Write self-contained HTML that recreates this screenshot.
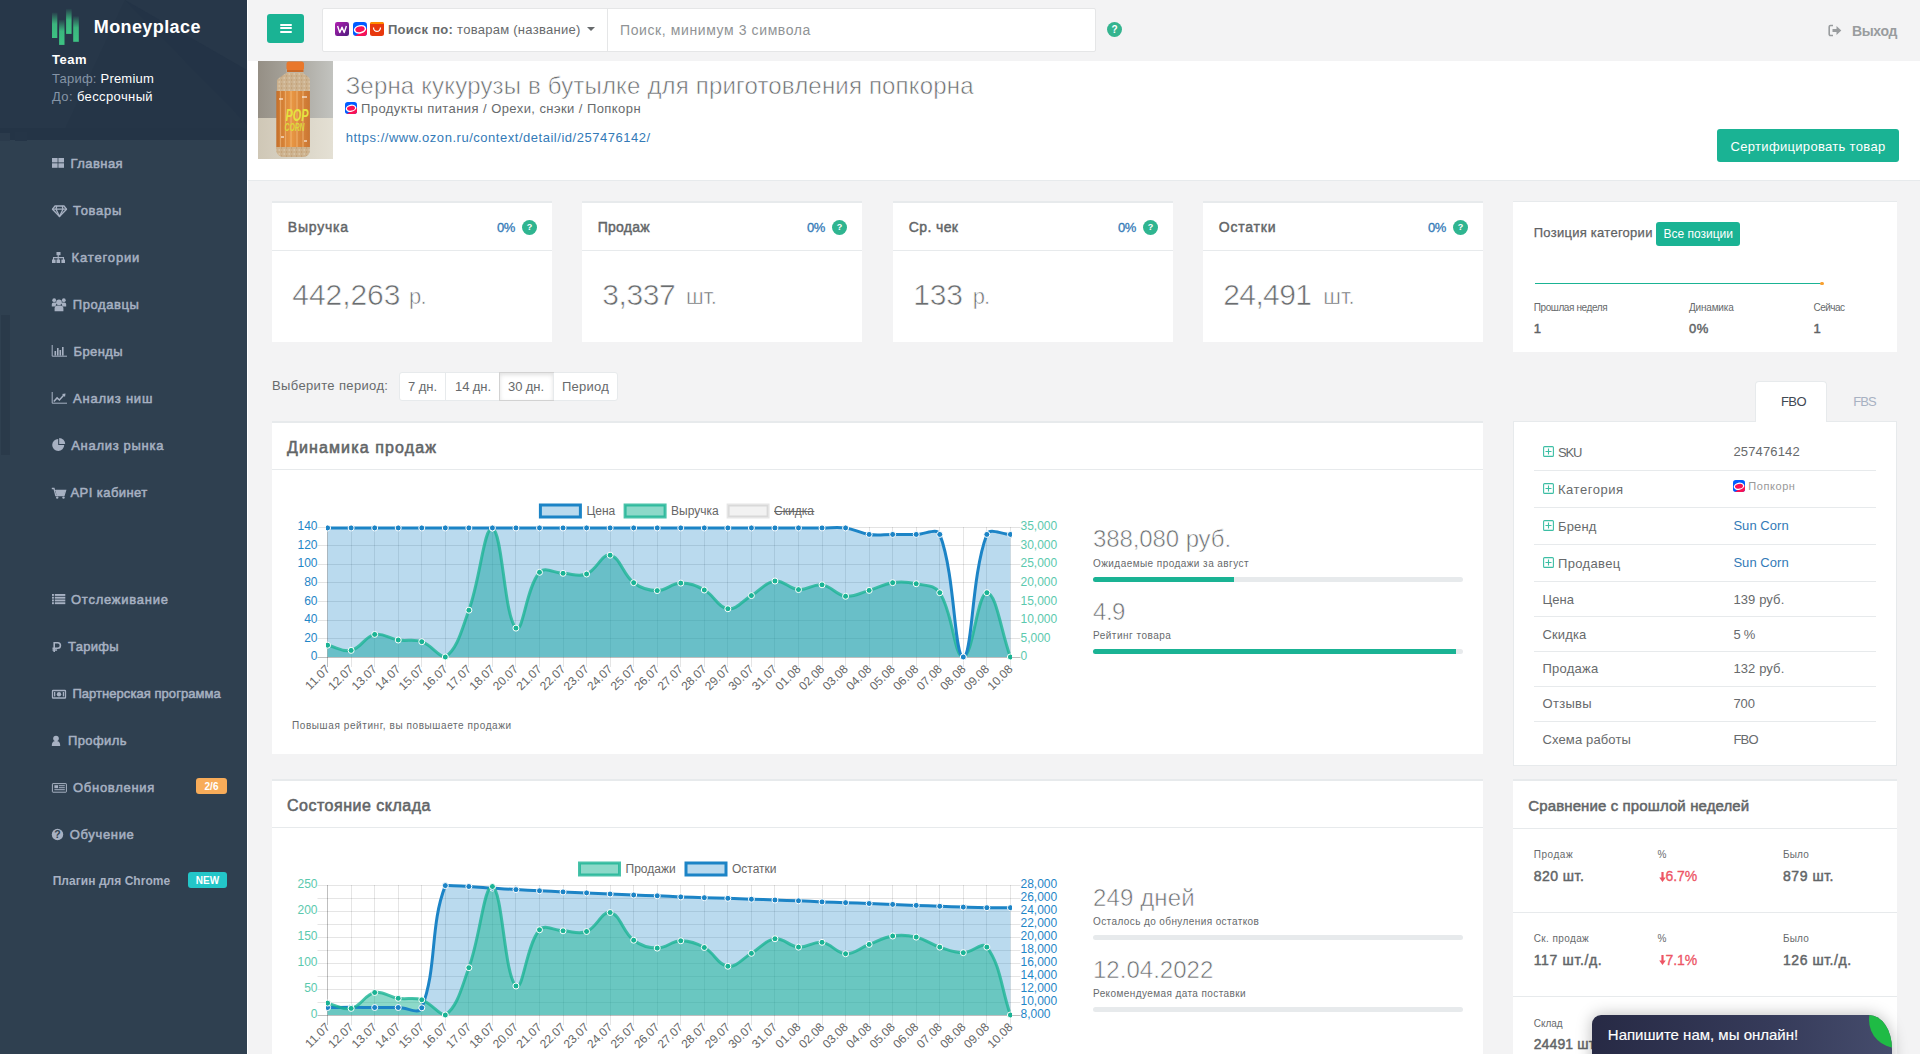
<!DOCTYPE html>
<html><head><meta charset="utf-8"><title>Moneyplace</title>
<style>
html,body{margin:0;padding:0;}
body{width:1920px;height:1054px;overflow:hidden;position:relative;background:#f3f3f4;font-family:"Liberation Sans", sans-serif;}

</style></head><body>
<div style="position:absolute;left:0px;top:0px;width:247px;height:1054px;background:#2f4050;"></div>
<svg style="position:absolute;left:0;top:0" width="247" height="141" viewBox="0 0 247 141">
<rect x="0" y="0" width="247" height="140" fill="#233346"/>
<polygon points="0,0 125,0 235,112 247,125 247,140 0,140" fill="#253547"/>
<polygon points="0,0 125,0 60,140 0,140" fill="#273749"/>
<polygon points="125,0 247,0 247,70" fill="#273749"/>
<rect x="0" y="128" width="247" height="12" fill="#243446"/>
<rect x="0" y="133" width="10" height="8" fill="#2b3b4c"/>
<rect x="15" y="132" width="12" height="13" fill="#253547"/>
</svg>
<div style="position:absolute;left:1px;top:315px;width:9px;height:140px;background:#2a3a4a;"></div>
<div style="position:absolute;left:247px;top:0px;width:1px;height:1054px;background:#ffffff;"></div>
<svg style="position:absolute;left:0;top:0" width="100" height="50" viewBox="0 0 100 50">
<defs><linearGradient id="lg" x1="0" y1="0" x2="0" y2="1">
<stop offset="0" stop-color="#3dc383" stop-opacity="0.05"/>
<stop offset="0.45" stop-color="#3dc383" stop-opacity="0.9"/>
<stop offset="1" stop-color="#3dc383" stop-opacity="1"/></linearGradient></defs>
<rect x="52" y="12.5" width="5.3" height="25.5" fill="url(#lg)"/>
<rect x="59.1" y="19.8" width="5.4" height="25.1" fill="url(#lg)"/>
<rect x="66.1" y="8.9" width="5.5" height="25" fill="url(#lg)"/>
<rect x="73.2" y="16.2" width="5.6" height="25.6" fill="url(#lg)"/>
</svg>
<div style="position:absolute;left:93.8px;top:15.66px;height:23px;line-height:23px;font-size:18px;color:#ffffff;font-weight:bold;white-space:nowrap;letter-spacing:0.395px;">Moneyplace</div>
<div style="position:absolute;left:52px;top:50.70px;height:17px;line-height:17px;font-size:13px;color:#ffffff;font-weight:bold;white-space:nowrap;letter-spacing:0.500px;">Team</div>
<div style="position:absolute;left:52px;top:70.00px;height:17px;line-height:17px;font-size:13px;color:#ffffff;font-weight:normal;white-space:nowrap;letter-spacing:0.213px;"><span style="color:#8594a6">Тариф:</span> Premium</div>
<div style="position:absolute;left:52px;top:88.30px;height:17px;line-height:17px;font-size:13px;color:#ffffff;font-weight:normal;white-space:nowrap;letter-spacing:0.381px;"><span style="color:#8594a6">До:</span> бессрочный</div>
<div style="position:absolute;left:70.4px;top:154.80px;height:17px;line-height:17px;font-size:13px;color:#a7b1c2;font-weight:normal;white-space:nowrap;letter-spacing:0.459px;-webkit-text-stroke:0.5px currentColor;">Главная</div>
<div style="position:absolute;left:73px;top:202.00px;height:17px;line-height:17px;font-size:13px;color:#a7b1c2;font-weight:normal;white-space:nowrap;letter-spacing:0.711px;-webkit-text-stroke:0.5px currentColor;">Товары</div>
<div style="position:absolute;left:71.6px;top:249.00px;height:17px;line-height:17px;font-size:13px;color:#a7b1c2;font-weight:normal;white-space:nowrap;letter-spacing:0.844px;-webkit-text-stroke:0.5px currentColor;">Категории</div>
<div style="position:absolute;left:72.7px;top:295.70px;height:17px;line-height:17px;font-size:13px;color:#a7b1c2;font-weight:normal;white-space:nowrap;letter-spacing:0.596px;-webkit-text-stroke:0.5px currentColor;">Продавцы</div>
<div style="position:absolute;left:73.5px;top:342.90px;height:17px;line-height:17px;font-size:13px;color:#a7b1c2;font-weight:normal;white-space:nowrap;letter-spacing:0.415px;-webkit-text-stroke:0.5px currentColor;">Бренды</div>
<div style="position:absolute;left:73.1px;top:389.90px;height:17px;line-height:17px;font-size:13px;color:#a7b1c2;font-weight:normal;white-space:nowrap;letter-spacing:0.762px;-webkit-text-stroke:0.5px currentColor;">Анализ ниш</div>
<div style="position:absolute;left:71.2px;top:437.10px;height:17px;line-height:17px;font-size:13px;color:#a7b1c2;font-weight:normal;white-space:nowrap;letter-spacing:0.703px;-webkit-text-stroke:0.5px currentColor;">Анализ рынка</div>
<div style="position:absolute;left:70.4px;top:484.10px;height:17px;line-height:17px;font-size:13px;color:#a7b1c2;font-weight:normal;white-space:nowrap;letter-spacing:0.453px;-webkit-text-stroke:0.5px currentColor;">API кабинет</div>
<div style="position:absolute;left:71px;top:591.20px;height:17px;line-height:17px;font-size:13px;color:#a7b1c2;font-weight:normal;white-space:nowrap;letter-spacing:0.748px;-webkit-text-stroke:0.5px currentColor;">Отслеживание</div>
<div style="position:absolute;left:68px;top:638.30px;height:17px;line-height:17px;font-size:13px;color:#a7b1c2;font-weight:normal;white-space:nowrap;letter-spacing:0.296px;-webkit-text-stroke:0.5px currentColor;">Тарифы</div>
<div style="position:absolute;left:72.4px;top:685.40px;height:17px;line-height:17px;font-size:13px;color:#a7b1c2;font-weight:normal;white-space:nowrap;letter-spacing:0.053px;-webkit-text-stroke:0.5px currentColor;">Партнерская программа</div>
<div style="position:absolute;left:68px;top:732.30px;height:17px;line-height:17px;font-size:13px;color:#a7b1c2;font-weight:normal;white-space:nowrap;letter-spacing:0.382px;-webkit-text-stroke:0.5px currentColor;">Профиль</div>
<div style="position:absolute;left:73px;top:779.40px;height:17px;line-height:17px;font-size:13px;color:#a7b1c2;font-weight:normal;white-space:nowrap;letter-spacing:0.713px;-webkit-text-stroke:0.5px currentColor;">Обновления</div>
<div style="position:absolute;left:69.7px;top:825.90px;height:17px;line-height:17px;font-size:13px;color:#a7b1c2;font-weight:normal;white-space:nowrap;letter-spacing:0.668px;-webkit-text-stroke:0.5px currentColor;">Обучение</div>
<div style="position:absolute;left:52.7px;top:873.94px;height:15px;line-height:15px;font-size:12px;color:#a7b1c2;font-weight:bold;white-space:nowrap;letter-spacing:0.047px;">Плагин для Chrome</div>
<div style="position:absolute;left:196px;top:778px;width:31px;height:16px;background:#f8ac59;border-radius:3px;"></div>
<div style="position:absolute;left:211.5px;top:780.03px;height:13px;line-height:13px;font-size:10px;color:#ffffff;font-weight:bold;white-space:nowrap;width:0;display:flex;justify-content:center;">2/6</div>
<div style="position:absolute;left:188px;top:872px;width:39px;height:16px;background:#23c6c8;border-radius:3px;"></div>
<div style="position:absolute;left:207.5px;top:874.03px;height:13px;line-height:13px;font-size:10px;color:#ffffff;font-weight:bold;white-space:nowrap;width:0;display:flex;justify-content:center;">NEW</div>
<svg style="position:absolute;left:0;top:0" width="247" height="900" viewBox="0 0 247 900" fill="#a7b1c2">
<!-- th-large -->
<rect x="52" y="158" width="5.6" height="4.4"/><rect x="58.4" y="158" width="5.6" height="4.4"/>
<rect x="52" y="163.3" width="5.6" height="4.5"/><rect x="58.4" y="163.3" width="5.6" height="4.5"/>
<!-- diamond -->
<g fill="none" stroke="#a7b1c2" stroke-width="1.3" stroke-linejoin="round">
<path d="M55,206 L64,206 L66.5,209.2 L59.5,216.5 L52.5,209.2 Z"/>
<path d="M52.5,209.2 L66.5,209.2 M56.8,206 L56,209.2 L59.5,216.5 L63,209.2 L62.2,206"/>
</g>
<!-- sitemap -->
<rect x="56.5" y="252" width="4" height="3.2"/>
<path d="M58.2,255 v2.6 M53.5,260 v-2.4 h10 v2.4 M58.2,257.6 v2.4" stroke="#a7b1c2" stroke-width="1.1" fill="none"/>
<rect x="52" y="259.5" width="3.6" height="3.5"/><rect x="56.5" y="259.5" width="3.6" height="3.5"/><rect x="61.4" y="259.5" width="3.6" height="3.5"/>
<!-- users -->
<circle cx="54.2" cy="300.2" r="1.9"/><circle cx="63.8" cy="300.2" r="1.9"/>
<path d="M51.8,306.6 v-2.2 c0,-1.2 0.8,-2 2,-2 h1.6 c0.8,0 1.3,0.3 1.6,0.8 c-0.9,0.9 -1.3,2 -1.4,3.4 Z"/>
<path d="M66.2,306.6 v-2.2 c0,-1.2 -0.8,-2 -2,-2 h-1.6 c-0.8,0 -1.3,0.3 -1.6,0.8 c0.9,0.9 1.3,2 1.4,3.4 Z"/>
<circle cx="59" cy="302.3" r="2.8"/>
<path d="M54.6,311.2 v-2.6 c0,-2 1.2,-3.2 3,-3.2 h2.8 c1.8,0 3,1.2 3,3.2 v2.6 Z"/>
<!-- bar chart -->
<path d="M52.2,345 v11.2 h14.8" stroke="#a7b1c2" stroke-width="1" fill="none"/>
<rect x="54.5" y="351" width="1.6" height="4.6"/><rect x="57" y="348" width="1.6" height="7.6"/>
<rect x="59.5" y="350" width="1.6" height="5.6"/><rect x="62" y="347" width="1.6" height="8.6"/>
<!-- line chart -->
<path d="M52.2,392 v11.2 h14.8" stroke="#a7b1c2" stroke-width="1" fill="none"/>
<path d="M53.8,401.5 l3.3,-3.6 l2.3,2.1 l4.5,-5" stroke="#a7b1c2" stroke-width="1.5" fill="none"/>
<path d="M62,394 l3.5,-0.6 l-0.5,3.5 Z"/>
<!-- pie -->
<path d="M58.2,439 v6 h6 a6,6 0 1 1 -6,-6 Z"/>
<path d="M59.2,438 a6,6 0 0 1 6,6 h-6 Z"/>
<!-- cart -->
<path d="M51.8,488.5 h2.2 l1.8,7.2 h8.2 l1.6,-5.4 h-10.3" stroke="#a7b1c2" stroke-width="1.3" fill="none"/>
<path d="M55.5,490.6 h9.8 l-1.3,4.4 h-7.6 Z"/>
<circle cx="57.2" cy="497.6" r="1.2"/><circle cx="63.5" cy="497.6" r="1.2"/>
<!-- list -->
<rect x="52" y="594" width="1.9" height="1.9"/><rect x="54.8" y="594" width="10.5" height="1.9"/>
<rect x="52" y="596.75" width="1.9" height="1.9"/><rect x="54.8" y="596.75" width="10.5" height="1.9"/>
<rect x="52" y="599.5" width="1.9" height="1.9"/><rect x="54.8" y="599.5" width="10.5" height="1.9"/>
<rect x="52" y="602.25" width="1.9" height="1.9"/><rect x="54.8" y="602.25" width="10.5" height="1.9"/>
<!-- rub -->
<path d="M54.2,652 v-9.2 h3.5 a2.7,2.7 0 0 1 0,5.4 h-5.2 M52.5,650 h4.6" stroke="#a7b1c2" stroke-width="1.6" fill="none"/>
<!-- money -->
<rect x="52.5" y="690.5" width="13" height="7.5" rx="0.6" stroke="#a7b1c2" stroke-width="1.3" fill="none"/>
<circle cx="59" cy="694.2" r="2.2"/>
<rect x="54" y="692" width="1.3" height="4.4"/><rect x="62.8" y="692" width="1.3" height="4.4"/>
<!-- user -->
<circle cx="56" cy="738.5" r="2.8"/><path d="M51.8,746 c0,-3.8 1.6,-5 4.2,-5 c2.6,0 4.2,1.2 4.2,5 Z"/>
<!-- newspaper -->
<rect x="52.4" y="783.6" width="14" height="8.6" rx="0.5" stroke="#a7b1c2" stroke-width="1" fill="none"/>
<rect x="54.4" y="785.2" width="3.6" height="3"/><rect x="58.8" y="785.2" width="6" height="1"/>
<rect x="58.8" y="787.2" width="6" height="1"/><rect x="54.4" y="789.2" width="10.4" height="1"/>
<!-- question circle -->
<circle cx="57.5" cy="834.5" r="5.7"/>
</svg>
<div style="position:absolute;left:52px;top:828px;width:11px;height:13px;color:#2f4050;font:bold 10.5px/13px 'Liberation Sans',sans-serif;text-align:center;">?</div>
<div style="position:absolute;left:267px;top:14px;width:37px;height:29px;background:#1ab394;border-radius:3px;"></div>
<div style="position:absolute;left:279.5px;top:23.8px;width:12.2px;height:2.1px;background:#fff;border-radius:1px;"></div>
<div style="position:absolute;left:279.5px;top:27.3px;width:12.2px;height:2.1px;background:#fff;border-radius:1px;"></div>
<div style="position:absolute;left:279.5px;top:30.9px;width:12.2px;height:2.1px;background:#fff;border-radius:1px;"></div>
<div style="position:absolute;left:322px;top:8px;width:774px;height:44px;background:#fff;border:1px solid #e5e6e7;border-radius:2px;box-sizing:border-box;"></div>
<div style="position:absolute;left:607px;top:9px;width:1px;height:42px;background:#e5e6e7;"></div>
<svg style="position:absolute;left:335px;top:22px" width="50" height="14" viewBox="0 0 50 14">
<defs><linearGradient id="wb" x1="0" y1="0" x2="1" y2="1"><stop offset="0" stop-color="#b01fb0"/><stop offset="1" stop-color="#4e1a7e"/></linearGradient></defs>
<rect x="0" y="0" width="14" height="14" rx="2.2" fill="url(#wb)"/>
<path d="M2.6,4 L4.8,10.6 L7,5.2 L9.2,10.6 L11.4,4" stroke="#fff" stroke-width="1.4" fill="none" stroke-linejoin="round"/>
<clipPath id="ozt"><rect x="18" y="0" width="14" height="14" rx="3.2"/></clipPath>
<g clip-path="url(#ozt)"><rect x="18" y="0" width="14" height="14" fill="#005bff"/>
<path d="M20,14 L32,6.5 L32,14 Z" fill="#f91155"/>
<ellipse cx="25" cy="7.3" rx="5.5" ry="3.5" transform="rotate(-12 25 7.3)" fill="#f91155" stroke="#fff" stroke-width="1.5"/></g>
<rect x="35" y="0" width="14" height="14" rx="2.5" fill="#e8380d"/>
<rect x="35" y="0" width="14" height="3" rx="2" fill="#ff8c00"/>
<rect x="35" y="2" width="14" height="2" fill="#e8380d"/>
<path d="M38.5,5.6 a3.5,3.8 0 0 0 7,0" stroke="#fff" stroke-width="1.2" fill="none"/>
</svg>
<div style="position:absolute;left:388px;top:21.30px;height:17px;line-height:17px;font-size:13px;color:#676a6c;font-weight:normal;white-space:nowrap;letter-spacing:0.270px;"><b>Поиск по:</b> товарам (название)</div>
<div style="position:absolute;left:587px;top:27px;width:0;height:0;border-left:4px solid transparent;border-right:4px solid transparent;border-top:4px solid #676a6c;"></div>
<div style="position:absolute;left:620px;top:21.35px;height:18px;line-height:18px;font-size:14px;color:#909395;font-weight:normal;white-space:nowrap;letter-spacing:0.602px;">Поиск, минимум 3 символа</div>
<div style="position:absolute;left:1107px;top:22px;width:15px;height:15px;border-radius:50%;background:#34b48f;color:#fff;font:bold 10px/15px 'Liberation Sans',sans-serif;text-align:center;">?</div>
<svg style="position:absolute;left:1828px;top:24px" width="14" height="13" viewBox="0 0 14 13">
<path d="M5,1.5 H2.5 a1.3,1.3 0 0 0 -1.3,1.3 v7.4 a1.3,1.3 0 0 0 1.3,1.3 H5" stroke="#999c9e" stroke-width="1.6" fill="none"/>
<path d="M4.5,5 h4 v-3 l4.8,4.5 l-4.8,4.5 v-3 h-4 Z" fill="#999c9e"/>
</svg>
<div style="position:absolute;left:1852px;top:21.65px;height:18px;line-height:18px;font-size:14px;color:#999c9e;font-weight:bold;white-space:nowrap;letter-spacing:-0.353px;">Выход</div>
<div style="position:absolute;left:248px;top:61px;width:1672px;height:119px;background:#fff;"></div>
<div style="position:absolute;left:248px;top:180px;width:1672px;height:1px;background:#e7eaec;"></div>
<svg style="position:absolute;left:258px;top:61px" width="75" height="98" viewBox="0 0 75 98">
<defs>
<linearGradient id="wall" x1="0" y1="0" x2="1" y2="0"><stop offset="0" stop-color="#958f85"/><stop offset="0.5" stop-color="#aaa79f"/><stop offset="1" stop-color="#c2c3bf"/></linearGradient>
<linearGradient id="table" x1="0" y1="0" x2="1" y2="0"><stop offset="0" stop-color="#cfc7b6"/><stop offset="1" stop-color="#e4e0d4"/></linearGradient>
<linearGradient id="lab" x1="0" y1="0" x2="1" y2="0"><stop offset="0" stop-color="#c56f2a"/><stop offset="0.45" stop-color="#e99744"/><stop offset="1" stop-color="#c97532"/></linearGradient>
<pattern id="corn" width="5" height="4" patternUnits="userSpaceOnUse"><rect width="5" height="4" fill="#cfb28c"/><circle cx="1.2" cy="1" r="0.8" fill="#e2d2b6"/><circle cx="3.6" cy="3" r="0.7" fill="#bf9868"/></pattern>
</defs>
<rect x="0" y="0" width="75" height="57" fill="url(#wall)"/>
<rect x="0" y="57" width="75" height="41" fill="url(#table)"/>
<path d="M28.5,8 h17 v4 c0,3 6.5,6 6.5,13 v64 c0,4 -3,7 -7,7 h-19 c-4,0 -7,-3 -7,-7 v-64 c0,-7 9.5,-10 9.5,-13 z" fill="#bfb5a3"/>
<path d="M19,19 c2,-3 7,-5 9,-7 h17 c2,2 7,4 7,7 v11 h-33 z" fill="url(#corn)" opacity="0.85"/>
<rect x="28.5" y="0.5" width="17.5" height="9" rx="2.5" fill="#e9772b"/>
<rect x="29" y="9" width="16.5" height="2" fill="#c96a2a"/>
<rect x="18.3" y="30" width="33.6" height="56" fill="url(#lab)"/>
<path d="M22.5,30 v56 M27.5,30 v56 M33,30 v56 M39,30 v56 M45,30 v56" stroke="#f5be80" stroke-width="1.3" opacity="0.6"/>
<path d="M21,38 h4 M44,36 h5 M23,76 h3 M46,80 h3" stroke="#fff" stroke-width="1.5" opacity="0.7"/>
<text x="27.5" y="60" font-family="Liberation Sans" font-weight="bold" font-style="italic" font-size="17" fill="#e5e240" textLength="23" lengthAdjust="spacingAndGlyphs">POP</text>
<text x="26.5" y="70" font-family="Liberation Sans" font-weight="bold" font-style="italic" font-size="11" fill="#dcd83c" textLength="20" lengthAdjust="spacingAndGlyphs">CORN</text>
<path d="M18.3,86 h33.6 v3 c0,4 -3,7 -7,7 h-19.6 c-4,0 -7,-3 -7,-7 z" fill="url(#corn)" opacity="0.9"/>
</svg>
<div style="position:absolute;left:345.7px;top:70.68px;height:30px;line-height:30px;font-size:24px;color:#6a6d6f;font-weight:normal;white-space:nowrap;letter-spacing:0.172px;-webkit-text-stroke:0.6px #ffffff;">Зерна кукурузы в бутылке для приготовления попкорна</div>
<svg style="position:absolute;left:345px;top:101.5px" width="12" height="12" viewBox="0 0 14 14">
<defs><clipPath id="oz345101"><rect x="0" y="0" width="14" height="14" rx="3.2"/></clipPath></defs>
<g clip-path="url(#oz345101)">
<rect x="0" y="0" width="14" height="14" fill="#005bff"/>
<path d="M2,14 L14,6.5 L14,14 Z" fill="#f91155"/>
<ellipse cx="7" cy="7.3" rx="5.5" ry="3.5" transform="rotate(-12 7 7.3)" fill="#f91155" stroke="#fff" stroke-width="1.5"/>
</g>
</svg>
<div style="position:absolute;left:361px;top:99.80px;height:17px;line-height:17px;font-size:13px;color:#676a6c;font-weight:normal;white-space:nowrap;letter-spacing:0.428px;">Продукты питания / Орехи, снэки / Попкорн</div>
<div style="position:absolute;left:345.7px;top:128.70px;height:17px;line-height:17px;font-size:13px;color:#337ab7;font-weight:normal;white-space:nowrap;letter-spacing:0.527px;">https://www.ozon.ru/context/detail/id/257476142/</div>
<div style="position:absolute;left:1717px;top:129px;width:182px;height:33px;background:#1ab394;border-radius:3px;"></div>
<div style="position:absolute;left:1730.5px;top:138.00px;height:17px;line-height:17px;font-size:13px;color:#ffffff;font-weight:normal;white-space:nowrap;letter-spacing:0.323px;">Сертифицировать товар</div>
<div style="position:absolute;left:272px;top:201px;width:280px;height:2px;background:#e7eaec;"></div>
<div style="position:absolute;left:272px;top:203px;width:280px;height:139px;background:#fff;"></div>
<div style="position:absolute;left:272px;top:250px;width:280px;height:1px;background:#e7eaec;"></div>
<div style="position:absolute;left:287.8px;top:218.15px;height:18px;line-height:18px;font-size:14px;color:#626567;font-weight:normal;white-space:nowrap;letter-spacing:0.779px;-webkit-text-stroke:0.45px currentColor;">Выручка</div>
<div style="position:absolute;left:497px;top:219.30px;height:17px;line-height:17px;font-size:13px;color:#337ab7;font-weight:normal;white-space:nowrap;letter-spacing:-0.398px;-webkit-text-stroke:0.3px currentColor;">0%</div>
<div style="position:absolute;left:522px;top:220px;width:15px;height:15px;border-radius:50%;background:#2fb590;color:#fff;font:bold 9px/15px 'Liberation Sans',sans-serif;text-align:center;">?</div>
<div style="position:absolute;left:292.3px;top:275.61px;height:38px;line-height:38px;font-size:30px;color:#6a6d6f;font-weight:normal;white-space:nowrap;letter-spacing:-0.065px;-webkit-text-stroke:0.6px #ffffff;">442,263</div>
<div style="position:absolute;left:582px;top:201px;width:280px;height:2px;background:#e7eaec;"></div>
<div style="position:absolute;left:582px;top:203px;width:280px;height:139px;background:#fff;"></div>
<div style="position:absolute;left:582px;top:250px;width:280px;height:1px;background:#e7eaec;"></div>
<div style="position:absolute;left:597.8px;top:218.15px;height:18px;line-height:18px;font-size:14px;color:#626567;font-weight:normal;white-space:nowrap;letter-spacing:0.224px;-webkit-text-stroke:0.45px currentColor;">Продаж</div>
<div style="position:absolute;left:807px;top:219.30px;height:17px;line-height:17px;font-size:13px;color:#337ab7;font-weight:normal;white-space:nowrap;letter-spacing:-0.398px;-webkit-text-stroke:0.3px currentColor;">0%</div>
<div style="position:absolute;left:832px;top:220px;width:15px;height:15px;border-radius:50%;background:#2fb590;color:#fff;font:bold 9px/15px 'Liberation Sans',sans-serif;text-align:center;">?</div>
<div style="position:absolute;left:602.3px;top:275.61px;height:38px;line-height:38px;font-size:30px;color:#6a6d6f;font-weight:normal;white-space:nowrap;letter-spacing:-0.416px;-webkit-text-stroke:0.6px #ffffff;">3,337</div>
<div style="position:absolute;left:893px;top:201px;width:280px;height:2px;background:#e7eaec;"></div>
<div style="position:absolute;left:893px;top:203px;width:280px;height:139px;background:#fff;"></div>
<div style="position:absolute;left:893px;top:250px;width:280px;height:1px;background:#e7eaec;"></div>
<div style="position:absolute;left:908.8px;top:218.15px;height:18px;line-height:18px;font-size:14px;color:#626567;font-weight:normal;white-space:nowrap;letter-spacing:0.373px;-webkit-text-stroke:0.45px currentColor;">Ср. чек</div>
<div style="position:absolute;left:1118px;top:219.30px;height:17px;line-height:17px;font-size:13px;color:#337ab7;font-weight:normal;white-space:nowrap;letter-spacing:-0.398px;-webkit-text-stroke:0.3px currentColor;">0%</div>
<div style="position:absolute;left:1143px;top:220px;width:15px;height:15px;border-radius:50%;background:#2fb590;color:#fff;font:bold 9px/15px 'Liberation Sans',sans-serif;text-align:center;">?</div>
<div style="position:absolute;left:913.3px;top:275.61px;height:38px;line-height:38px;font-size:30px;color:#6a6d6f;font-weight:normal;white-space:nowrap;letter-spacing:-0.221px;-webkit-text-stroke:0.6px #ffffff;">133</div>
<div style="position:absolute;left:1203px;top:201px;width:280px;height:2px;background:#e7eaec;"></div>
<div style="position:absolute;left:1203px;top:203px;width:280px;height:139px;background:#fff;"></div>
<div style="position:absolute;left:1203px;top:250px;width:280px;height:1px;background:#e7eaec;"></div>
<div style="position:absolute;left:1218.8px;top:218.15px;height:18px;line-height:18px;font-size:14px;color:#626567;font-weight:normal;white-space:nowrap;letter-spacing:0.788px;-webkit-text-stroke:0.45px currentColor;">Остатки</div>
<div style="position:absolute;left:1428px;top:219.30px;height:17px;line-height:17px;font-size:13px;color:#337ab7;font-weight:normal;white-space:nowrap;letter-spacing:-0.398px;-webkit-text-stroke:0.3px currentColor;">0%</div>
<div style="position:absolute;left:1453px;top:220px;width:15px;height:15px;border-radius:50%;background:#2fb590;color:#fff;font:bold 9px/15px 'Liberation Sans',sans-serif;text-align:center;">?</div>
<div style="position:absolute;left:1223.3px;top:275.61px;height:38px;line-height:38px;font-size:30px;color:#6a6d6f;font-weight:normal;white-space:nowrap;letter-spacing:-0.628px;-webkit-text-stroke:0.6px #ffffff;">24,491</div>
<div style="position:absolute;left:409px;top:283.38px;height:28px;line-height:28px;font-size:22px;color:#6a6d6f;font-weight:normal;white-space:nowrap;letter-spacing:-0.830px;-webkit-text-stroke:0.6px #ffffff;">р.</div>
<div style="position:absolute;left:686px;top:283.38px;height:28px;line-height:28px;font-size:22px;color:#6a6d6f;font-weight:normal;white-space:nowrap;letter-spacing:-0.235px;-webkit-text-stroke:0.6px #ffffff;">шт.</div>
<div style="position:absolute;left:972.7px;top:283.38px;height:28px;line-height:28px;font-size:22px;color:#6a6d6f;font-weight:normal;white-space:nowrap;letter-spacing:-0.980px;-webkit-text-stroke:0.6px #ffffff;">р.</div>
<div style="position:absolute;left:1323.3px;top:283.38px;height:28px;line-height:28px;font-size:22px;color:#6a6d6f;font-weight:normal;white-space:nowrap;letter-spacing:-0.002px;-webkit-text-stroke:0.6px #ffffff;">шт.</div>
<div style="position:absolute;left:272px;top:377.00px;height:17px;line-height:17px;font-size:13px;color:#676a6c;font-weight:normal;white-space:nowrap;letter-spacing:0.357px;">Выберите период:</div>
<div style="position:absolute;left:399px;top:372px;width:219px;height:29px;background:#fff;border:1px solid #e7eaec;border-radius:3px;box-sizing:border-box;"></div>
<div style="position:absolute;left:445px;top:373px;width:1px;height:27px;background:#e7eaec;"></div>
<div style="position:absolute;left:499px;top:372px;width:55px;height:29px;background:#fff;border:1px solid #d2d2d2;box-sizing:border-box;box-shadow:inset 0 2px 4px rgba(0,0,0,0.12);"></div>
<div style="position:absolute;left:553px;top:373px;width:1px;height:27px;background:#e7eaec;"></div>
<div style="position:absolute;left:408px;top:378.00px;height:17px;line-height:17px;font-size:13px;color:#676a6c;font-weight:normal;white-space:nowrap;letter-spacing:-0.044px;">7 дн.</div>
<div style="position:absolute;left:455px;top:378.00px;height:17px;line-height:17px;font-size:13px;color:#676a6c;font-weight:normal;white-space:nowrap;letter-spacing:-0.076px;">14 дн.</div>
<div style="position:absolute;left:508px;top:378.00px;height:17px;line-height:17px;font-size:13px;color:#676a6c;font-weight:normal;white-space:nowrap;letter-spacing:-0.076px;">30 дн.</div>
<div style="position:absolute;left:562px;top:378.00px;height:17px;line-height:17px;font-size:13px;color:#676a6c;font-weight:normal;white-space:nowrap;letter-spacing:0.232px;">Период</div>
<div style="position:absolute;left:272px;top:421px;width:1211px;height:2px;background:#e7eaec;"></div>
<div style="position:absolute;left:272px;top:423px;width:1211px;height:331px;background:#fff;"></div>
<div style="position:absolute;left:272px;top:469px;width:1211px;height:1px;background:#e7eaec;"></div>
<div style="position:absolute;left:287px;top:437.96px;height:20px;line-height:20px;font-size:16px;color:#626567;font-weight:normal;white-space:nowrap;letter-spacing:1.121px;-webkit-text-stroke:0.55px currentColor;">Динамика продаж</div>
<div style="position:absolute;left:292px;top:719.03px;height:13px;line-height:13px;font-size:10px;color:#676a6c;font-weight:normal;white-space:nowrap;letter-spacing:0.592px;">Повышая рейтинг, вы повышаете продажи</div>
<div style="position:absolute;left:1093px;top:524.38px;height:30px;line-height:30px;font-size:24px;color:#6a6d6f;font-weight:normal;white-space:nowrap;letter-spacing:-0.099px;-webkit-text-stroke:0.6px #ffffff;">388,080 руб.</div>
<div style="position:absolute;left:1093px;top:556.74px;height:13px;line-height:13px;font-size:10px;color:#676a6c;font-weight:normal;white-space:nowrap;letter-spacing:0.440px;">Ожидаемые продажи за август</div>
<div style="position:absolute;left:1093px;top:577px;width:370px;height:5px;background:#e7eaec;border-radius:3px;"></div>
<div style="position:absolute;left:1093px;top:577px;width:141px;height:5px;background:#1ab394;border-radius:3px 0 0 3px;"></div>
<div style="position:absolute;left:1093px;top:596.58px;height:30px;line-height:30px;font-size:24px;color:#6a6d6f;font-weight:normal;white-space:nowrap;letter-spacing:-0.458px;-webkit-text-stroke:0.6px #ffffff;">4.9</div>
<div style="position:absolute;left:1093px;top:629.43px;height:13px;line-height:13px;font-size:10px;color:#676a6c;font-weight:normal;white-space:nowrap;letter-spacing:0.492px;">Рейтинг товара</div>
<div style="position:absolute;left:1093px;top:649px;width:370px;height:5px;background:#e7eaec;border-radius:3px;"></div>
<div style="position:absolute;left:1093px;top:649px;width:363px;height:5px;background:#1ab394;border-radius:3px 0 0 3px;"></div>
<div style="position:absolute;left:272px;top:779px;width:1211px;height:2px;background:#e7eaec;"></div>
<div style="position:absolute;left:272px;top:781px;width:1211px;height:273px;background:#fff;"></div>
<div style="position:absolute;left:272px;top:827px;width:1211px;height:1px;background:#e7eaec;"></div>
<div style="position:absolute;left:287px;top:796.46px;height:20px;line-height:20px;font-size:16px;color:#626567;font-weight:normal;white-space:nowrap;letter-spacing:0.504px;-webkit-text-stroke:0.55px currentColor;">Состояние склада</div>
<div style="position:absolute;left:1093px;top:883.08px;height:30px;line-height:30px;font-size:24px;color:#6a6d6f;font-weight:normal;white-space:nowrap;letter-spacing:0.121px;-webkit-text-stroke:0.6px #ffffff;">249 дней</div>
<div style="position:absolute;left:1093px;top:915.03px;height:13px;line-height:13px;font-size:10px;color:#676a6c;font-weight:normal;white-space:nowrap;letter-spacing:0.404px;">Осталось до обнуления остатков</div>
<div style="position:absolute;left:1093px;top:935px;width:370px;height:5px;background:#e7eaec;border-radius:3px;"></div>
<div style="position:absolute;left:1093px;top:954.78px;height:30px;line-height:30px;font-size:24px;color:#6a6d6f;font-weight:normal;white-space:nowrap;letter-spacing:0.017px;-webkit-text-stroke:0.6px #ffffff;">12.04.2022</div>
<div style="position:absolute;left:1093px;top:986.74px;height:13px;line-height:13px;font-size:10px;color:#676a6c;font-weight:normal;white-space:nowrap;letter-spacing:0.412px;">Рекомендуемая дата поставки</div>
<div style="position:absolute;left:1093px;top:1007px;width:370px;height:5px;background:#e7eaec;border-radius:3px;"></div>
<svg style="position:absolute;left:0;top:0" width="1920" height="1054" viewBox="0 0 1920 1054">
<defs><clipPath id="c1"><rect x="326.1" y="0" width="685.8" height="1054"/></clipPath></defs>
<line x1="317.5" y1="657.5" x2="1020.5" y2="657.5" stroke="rgba(0,0,0,0.25)" stroke-width="1"/>
<line x1="317.5" y1="638.5" x2="1020.5" y2="638.5" stroke="rgba(0,0,0,0.11)" stroke-width="1"/>
<line x1="317.5" y1="620.5" x2="1020.5" y2="620.5" stroke="rgba(0,0,0,0.11)" stroke-width="1"/>
<line x1="317.5" y1="601.5" x2="1020.5" y2="601.5" stroke="rgba(0,0,0,0.11)" stroke-width="1"/>
<line x1="317.5" y1="582.5" x2="1020.5" y2="582.5" stroke="rgba(0,0,0,0.11)" stroke-width="1"/>
<line x1="317.5" y1="564.5" x2="1020.5" y2="564.5" stroke="rgba(0,0,0,0.11)" stroke-width="1"/>
<line x1="317.5" y1="545.5" x2="1020.5" y2="545.5" stroke="rgba(0,0,0,0.11)" stroke-width="1"/>
<line x1="317.5" y1="527.5" x2="1020.5" y2="527.5" stroke="rgba(0,0,0,0.11)" stroke-width="1"/>
<line x1="327.5" y1="527.0" x2="327.5" y2="667.0" stroke="rgba(0,0,0,0.25)" stroke-width="1"/>
<line x1="351.5" y1="527.0" x2="351.5" y2="667.0" stroke="rgba(0,0,0,0.1)" stroke-width="1"/>
<line x1="374.5" y1="527.0" x2="374.5" y2="667.0" stroke="rgba(0,0,0,0.1)" stroke-width="1"/>
<line x1="398.5" y1="527.0" x2="398.5" y2="667.0" stroke="rgba(0,0,0,0.1)" stroke-width="1"/>
<line x1="421.5" y1="527.0" x2="421.5" y2="667.0" stroke="rgba(0,0,0,0.1)" stroke-width="1"/>
<line x1="445.5" y1="527.0" x2="445.5" y2="667.0" stroke="rgba(0,0,0,0.1)" stroke-width="1"/>
<line x1="468.5" y1="527.0" x2="468.5" y2="667.0" stroke="rgba(0,0,0,0.1)" stroke-width="1"/>
<line x1="492.5" y1="527.0" x2="492.5" y2="667.0" stroke="rgba(0,0,0,0.1)" stroke-width="1"/>
<line x1="515.5" y1="527.0" x2="515.5" y2="667.0" stroke="rgba(0,0,0,0.1)" stroke-width="1"/>
<line x1="539.5" y1="527.0" x2="539.5" y2="667.0" stroke="rgba(0,0,0,0.1)" stroke-width="1"/>
<line x1="563.5" y1="527.0" x2="563.5" y2="667.0" stroke="rgba(0,0,0,0.1)" stroke-width="1"/>
<line x1="586.5" y1="527.0" x2="586.5" y2="667.0" stroke="rgba(0,0,0,0.1)" stroke-width="1"/>
<line x1="610.5" y1="527.0" x2="610.5" y2="667.0" stroke="rgba(0,0,0,0.1)" stroke-width="1"/>
<line x1="633.5" y1="527.0" x2="633.5" y2="667.0" stroke="rgba(0,0,0,0.1)" stroke-width="1"/>
<line x1="657.5" y1="527.0" x2="657.5" y2="667.0" stroke="rgba(0,0,0,0.1)" stroke-width="1"/>
<line x1="680.5" y1="527.0" x2="680.5" y2="667.0" stroke="rgba(0,0,0,0.1)" stroke-width="1"/>
<line x1="704.5" y1="527.0" x2="704.5" y2="667.0" stroke="rgba(0,0,0,0.1)" stroke-width="1"/>
<line x1="727.5" y1="527.0" x2="727.5" y2="667.0" stroke="rgba(0,0,0,0.1)" stroke-width="1"/>
<line x1="751.5" y1="527.0" x2="751.5" y2="667.0" stroke="rgba(0,0,0,0.1)" stroke-width="1"/>
<line x1="774.5" y1="527.0" x2="774.5" y2="667.0" stroke="rgba(0,0,0,0.1)" stroke-width="1"/>
<line x1="798.5" y1="527.0" x2="798.5" y2="667.0" stroke="rgba(0,0,0,0.1)" stroke-width="1"/>
<line x1="822.5" y1="527.0" x2="822.5" y2="667.0" stroke="rgba(0,0,0,0.1)" stroke-width="1"/>
<line x1="845.5" y1="527.0" x2="845.5" y2="667.0" stroke="rgba(0,0,0,0.1)" stroke-width="1"/>
<line x1="869.5" y1="527.0" x2="869.5" y2="667.0" stroke="rgba(0,0,0,0.1)" stroke-width="1"/>
<line x1="892.5" y1="527.0" x2="892.5" y2="667.0" stroke="rgba(0,0,0,0.1)" stroke-width="1"/>
<line x1="916.5" y1="527.0" x2="916.5" y2="667.0" stroke="rgba(0,0,0,0.1)" stroke-width="1"/>
<line x1="939.5" y1="527.0" x2="939.5" y2="667.0" stroke="rgba(0,0,0,0.1)" stroke-width="1"/>
<line x1="963.5" y1="527.0" x2="963.5" y2="667.0" stroke="rgba(0,0,0,0.1)" stroke-width="1"/>
<line x1="986.5" y1="527.0" x2="986.5" y2="667.0" stroke="rgba(0,0,0,0.1)" stroke-width="1"/>
<line x1="1010.5" y1="527.0" x2="1010.5" y2="667.0" stroke="rgba(0,0,0,0.1)" stroke-width="1"/>
<text x="317.5" y="660.2" text-anchor="end" font-family="Liberation Sans" font-size="12" fill="#1f86c7">0</text>
<text x="317.5" y="641.6" text-anchor="end" font-family="Liberation Sans" font-size="12" fill="#1f86c7">20</text>
<text x="317.5" y="623.1" text-anchor="end" font-family="Liberation Sans" font-size="12" fill="#1f86c7">40</text>
<text x="317.5" y="604.5" text-anchor="end" font-family="Liberation Sans" font-size="12" fill="#1f86c7">60</text>
<text x="317.5" y="585.9" text-anchor="end" font-family="Liberation Sans" font-size="12" fill="#1f86c7">80</text>
<text x="317.5" y="567.3" text-anchor="end" font-family="Liberation Sans" font-size="12" fill="#1f86c7">100</text>
<text x="317.5" y="548.8" text-anchor="end" font-family="Liberation Sans" font-size="12" fill="#1f86c7">120</text>
<text x="317.5" y="530.2" text-anchor="end" font-family="Liberation Sans" font-size="12" fill="#1f86c7">140</text>
<text x="1020.5" y="660.2" text-anchor="start" font-family="Liberation Sans" font-size="12" fill="#5bc9ae">0</text>
<text x="1020.5" y="641.6" text-anchor="start" font-family="Liberation Sans" font-size="12" fill="#5bc9ae">5,000</text>
<text x="1020.5" y="623.1" text-anchor="start" font-family="Liberation Sans" font-size="12" fill="#5bc9ae">10,000</text>
<text x="1020.5" y="604.5" text-anchor="start" font-family="Liberation Sans" font-size="12" fill="#5bc9ae">15,000</text>
<text x="1020.5" y="585.9" text-anchor="start" font-family="Liberation Sans" font-size="12" fill="#5bc9ae">20,000</text>
<text x="1020.5" y="567.3" text-anchor="start" font-family="Liberation Sans" font-size="12" fill="#5bc9ae">25,000</text>
<text x="1020.5" y="548.8" text-anchor="start" font-family="Liberation Sans" font-size="12" fill="#5bc9ae">30,000</text>
<text x="1020.5" y="530.2" text-anchor="start" font-family="Liberation Sans" font-size="12" fill="#5bc9ae">35,000</text>
<text transform="translate(327.60,666.8) rotate(-45)" x="0" y="4.3" text-anchor="end" font-family="Liberation Sans" font-size="12" fill="#666">11.07</text>
<text transform="translate(351.14,666.8) rotate(-45)" x="0" y="4.3" text-anchor="end" font-family="Liberation Sans" font-size="12" fill="#666">12.07</text>
<text transform="translate(374.69,666.8) rotate(-45)" x="0" y="4.3" text-anchor="end" font-family="Liberation Sans" font-size="12" fill="#666">13.07</text>
<text transform="translate(398.23,666.8) rotate(-45)" x="0" y="4.3" text-anchor="end" font-family="Liberation Sans" font-size="12" fill="#666">14.07</text>
<text transform="translate(421.78,666.8) rotate(-45)" x="0" y="4.3" text-anchor="end" font-family="Liberation Sans" font-size="12" fill="#666">15.07</text>
<text transform="translate(445.32,666.8) rotate(-45)" x="0" y="4.3" text-anchor="end" font-family="Liberation Sans" font-size="12" fill="#666">16.07</text>
<text transform="translate(468.87,666.8) rotate(-45)" x="0" y="4.3" text-anchor="end" font-family="Liberation Sans" font-size="12" fill="#666">17.07</text>
<text transform="translate(492.41,666.8) rotate(-45)" x="0" y="4.3" text-anchor="end" font-family="Liberation Sans" font-size="12" fill="#666">18.07</text>
<text transform="translate(515.96,666.8) rotate(-45)" x="0" y="4.3" text-anchor="end" font-family="Liberation Sans" font-size="12" fill="#666">20.07</text>
<text transform="translate(539.50,666.8) rotate(-45)" x="0" y="4.3" text-anchor="end" font-family="Liberation Sans" font-size="12" fill="#666">21.07</text>
<text transform="translate(563.05,666.8) rotate(-45)" x="0" y="4.3" text-anchor="end" font-family="Liberation Sans" font-size="12" fill="#666">22.07</text>
<text transform="translate(586.59,666.8) rotate(-45)" x="0" y="4.3" text-anchor="end" font-family="Liberation Sans" font-size="12" fill="#666">23.07</text>
<text transform="translate(610.14,666.8) rotate(-45)" x="0" y="4.3" text-anchor="end" font-family="Liberation Sans" font-size="12" fill="#666">24.07</text>
<text transform="translate(633.68,666.8) rotate(-45)" x="0" y="4.3" text-anchor="end" font-family="Liberation Sans" font-size="12" fill="#666">25.07</text>
<text transform="translate(657.23,666.8) rotate(-45)" x="0" y="4.3" text-anchor="end" font-family="Liberation Sans" font-size="12" fill="#666">26.07</text>
<text transform="translate(680.77,666.8) rotate(-45)" x="0" y="4.3" text-anchor="end" font-family="Liberation Sans" font-size="12" fill="#666">27.07</text>
<text transform="translate(704.32,666.8) rotate(-45)" x="0" y="4.3" text-anchor="end" font-family="Liberation Sans" font-size="12" fill="#666">28.07</text>
<text transform="translate(727.86,666.8) rotate(-45)" x="0" y="4.3" text-anchor="end" font-family="Liberation Sans" font-size="12" fill="#666">29.07</text>
<text transform="translate(751.41,666.8) rotate(-45)" x="0" y="4.3" text-anchor="end" font-family="Liberation Sans" font-size="12" fill="#666">30.07</text>
<text transform="translate(774.95,666.8) rotate(-45)" x="0" y="4.3" text-anchor="end" font-family="Liberation Sans" font-size="12" fill="#666">31.07</text>
<text transform="translate(798.50,666.8) rotate(-45)" x="0" y="4.3" text-anchor="end" font-family="Liberation Sans" font-size="12" fill="#666">01.08</text>
<text transform="translate(822.04,666.8) rotate(-45)" x="0" y="4.3" text-anchor="end" font-family="Liberation Sans" font-size="12" fill="#666">02.08</text>
<text transform="translate(845.59,666.8) rotate(-45)" x="0" y="4.3" text-anchor="end" font-family="Liberation Sans" font-size="12" fill="#666">03.08</text>
<text transform="translate(869.13,666.8) rotate(-45)" x="0" y="4.3" text-anchor="end" font-family="Liberation Sans" font-size="12" fill="#666">04.08</text>
<text transform="translate(892.68,666.8) rotate(-45)" x="0" y="4.3" text-anchor="end" font-family="Liberation Sans" font-size="12" fill="#666">05.08</text>
<text transform="translate(916.22,666.8) rotate(-45)" x="0" y="4.3" text-anchor="end" font-family="Liberation Sans" font-size="12" fill="#666">06.08</text>
<text transform="translate(939.77,666.8) rotate(-45)" x="0" y="4.3" text-anchor="end" font-family="Liberation Sans" font-size="12" fill="#666">07.08</text>
<text transform="translate(963.31,666.8) rotate(-45)" x="0" y="4.3" text-anchor="end" font-family="Liberation Sans" font-size="12" fill="#666">08.08</text>
<text transform="translate(986.86,666.8) rotate(-45)" x="0" y="4.3" text-anchor="end" font-family="Liberation Sans" font-size="12" fill="#666">09.08</text>
<text transform="translate(1010.40,666.8) rotate(-45)" x="0" y="4.3" text-anchor="end" font-family="Liberation Sans" font-size="12" fill="#666">10.08</text>
<path d="M327.60,645.20 C337.02,647.28 342.51,652.38 351.14,650.40 C361.34,648.06 364.51,636.65 374.69,634.40 C383.34,632.49 388.70,638.52 398.23,640.00 C407.54,641.44 413.18,638.59 421.78,641.70 C432.01,645.39 438.75,657.00 445.32,657.00 C457.59,648.80 461.71,629.80 468.87,610.20 C480.54,578.24 483.86,527.00 492.41,528.10 C502.70,532.01 504.11,616.98 515.96,628.10 C522.94,634.66 525.94,588.08 539.50,572.30 C544.78,566.16 553.63,572.96 563.05,573.30 C572.46,573.64 578.33,577.18 586.59,574.00 C597.16,569.94 601.58,553.62 610.14,555.20 C620.42,557.10 622.51,574.30 633.68,582.70 C641.35,588.46 647.79,590.52 657.23,590.60 C666.62,590.68 671.32,583.22 680.77,583.10 C690.16,582.98 695.86,585.39 704.32,590.00 C714.69,595.65 717.93,607.57 727.86,608.75 C736.76,609.81 742.12,601.08 751.41,595.60 C760.95,589.98 765.06,582.26 774.95,581.00 C783.90,579.86 788.88,588.82 798.50,589.60 C807.72,590.34 813.03,583.53 822.04,584.80 C831.86,586.19 835.81,595.09 845.59,596.25 C854.65,597.33 859.81,593.08 869.13,590.40 C878.65,587.66 883.02,584.06 892.68,582.70 C901.86,581.40 907.12,581.82 916.22,583.75 C925.95,585.82 934.70,584.82 939.77,592.70 C953.54,614.12 953.89,657.00 963.31,657.00 C972.73,657.00 977.44,592.70 986.86,592.70 C996.27,592.70 1000.98,631.28 1010.40,657.00 L1010.40,657.0 L327.60,657.0 Z" fill="rgba(26,179,148,0.5)"/>
<path d="M327.60,527.93 C337.02,527.93 341.73,527.93 351.14,527.93 C360.56,527.93 365.27,527.93 374.69,527.93 C384.11,527.93 388.82,527.93 398.23,527.93 C407.65,527.93 412.36,527.93 421.78,527.93 C431.20,527.93 435.91,527.93 445.32,527.93 C454.74,527.93 459.45,527.93 468.87,527.93 C478.29,527.93 483.00,527.93 492.41,527.93 C501.83,527.93 506.54,527.93 515.96,527.93 C525.38,527.93 530.09,527.93 539.50,527.93 C548.92,527.93 553.63,527.93 563.05,527.93 C572.47,527.93 577.18,527.93 586.59,527.93 C596.01,527.93 600.72,527.93 610.14,527.93 C619.56,527.93 624.26,527.93 633.68,527.93 C643.10,527.93 647.81,527.93 657.23,527.93 C666.65,527.93 671.35,527.93 680.77,527.93 C690.19,527.93 694.90,527.93 704.32,527.93 C713.74,527.93 718.44,527.93 727.86,527.93 C737.28,527.93 741.99,527.93 751.41,527.93 C760.82,527.93 765.53,527.93 774.95,527.93 C784.37,527.93 789.08,527.93 798.50,527.93 C807.91,527.93 812.62,527.93 822.04,527.93 C831.46,527.93 836.34,527.00 845.59,527.93 C855.18,529.25 859.54,533.10 869.13,534.43 C878.38,535.70 883.26,534.43 892.68,534.43 C902.09,534.43 906.80,534.43 916.22,534.43 C925.64,534.43 936.78,527.00 939.77,534.43 C955.61,575.68 953.89,657.00 963.31,657.00 C972.73,657.00 971.01,575.68 986.86,534.43 C989.84,527.00 1000.98,534.43 1010.40,534.43 L1010.40,657.0 L327.60,657.0 Z" fill="rgba(28,132,198,0.3)"/>
<g clip-path="url(#c1)">
<path d="M327.60,645.20 C337.02,647.28 342.51,652.38 351.14,650.40 C361.34,648.06 364.51,636.65 374.69,634.40 C383.34,632.49 388.70,638.52 398.23,640.00 C407.54,641.44 413.18,638.59 421.78,641.70 C432.01,645.39 438.75,657.00 445.32,657.00 C457.59,648.80 461.71,629.80 468.87,610.20 C480.54,578.24 483.86,527.00 492.41,528.10 C502.70,532.01 504.11,616.98 515.96,628.10 C522.94,634.66 525.94,588.08 539.50,572.30 C544.78,566.16 553.63,572.96 563.05,573.30 C572.46,573.64 578.33,577.18 586.59,574.00 C597.16,569.94 601.58,553.62 610.14,555.20 C620.42,557.10 622.51,574.30 633.68,582.70 C641.35,588.46 647.79,590.52 657.23,590.60 C666.62,590.68 671.32,583.22 680.77,583.10 C690.16,582.98 695.86,585.39 704.32,590.00 C714.69,595.65 717.93,607.57 727.86,608.75 C736.76,609.81 742.12,601.08 751.41,595.60 C760.95,589.98 765.06,582.26 774.95,581.00 C783.90,579.86 788.88,588.82 798.50,589.60 C807.72,590.34 813.03,583.53 822.04,584.80 C831.86,586.19 835.81,595.09 845.59,596.25 C854.65,597.33 859.81,593.08 869.13,590.40 C878.65,587.66 883.02,584.06 892.68,582.70 C901.86,581.40 907.12,581.82 916.22,583.75 C925.95,585.82 934.70,584.82 939.77,592.70 C953.54,614.12 953.89,657.00 963.31,657.00 C972.73,657.00 977.44,592.70 986.86,592.70 C996.27,592.70 1000.98,631.28 1010.40,657.00" fill="none" stroke="rgba(26,179,148,0.78)" stroke-width="3"/>
<circle cx="327.60" cy="645.20" r="3" fill="rgba(26,179,148,1)" stroke="#fff" stroke-width="1"/>
<circle cx="351.14" cy="650.40" r="3" fill="rgba(26,179,148,1)" stroke="#fff" stroke-width="1"/>
<circle cx="374.69" cy="634.40" r="3" fill="rgba(26,179,148,1)" stroke="#fff" stroke-width="1"/>
<circle cx="398.23" cy="640.00" r="3" fill="rgba(26,179,148,1)" stroke="#fff" stroke-width="1"/>
<circle cx="421.78" cy="641.70" r="3" fill="rgba(26,179,148,1)" stroke="#fff" stroke-width="1"/>
<circle cx="445.32" cy="657.00" r="3" fill="rgba(26,179,148,1)" stroke="#fff" stroke-width="1"/>
<circle cx="468.87" cy="610.20" r="3" fill="rgba(26,179,148,1)" stroke="#fff" stroke-width="1"/>
<circle cx="492.41" cy="528.10" r="3" fill="rgba(26,179,148,1)" stroke="#fff" stroke-width="1"/>
<circle cx="515.96" cy="628.10" r="3" fill="rgba(26,179,148,1)" stroke="#fff" stroke-width="1"/>
<circle cx="539.50" cy="572.30" r="3" fill="rgba(26,179,148,1)" stroke="#fff" stroke-width="1"/>
<circle cx="563.05" cy="573.30" r="3" fill="rgba(26,179,148,1)" stroke="#fff" stroke-width="1"/>
<circle cx="586.59" cy="574.00" r="3" fill="rgba(26,179,148,1)" stroke="#fff" stroke-width="1"/>
<circle cx="610.14" cy="555.20" r="3" fill="rgba(26,179,148,1)" stroke="#fff" stroke-width="1"/>
<circle cx="633.68" cy="582.70" r="3" fill="rgba(26,179,148,1)" stroke="#fff" stroke-width="1"/>
<circle cx="657.23" cy="590.60" r="3" fill="rgba(26,179,148,1)" stroke="#fff" stroke-width="1"/>
<circle cx="680.77" cy="583.10" r="3" fill="rgba(26,179,148,1)" stroke="#fff" stroke-width="1"/>
<circle cx="704.32" cy="590.00" r="3" fill="rgba(26,179,148,1)" stroke="#fff" stroke-width="1"/>
<circle cx="727.86" cy="608.75" r="3" fill="rgba(26,179,148,1)" stroke="#fff" stroke-width="1"/>
<circle cx="751.41" cy="595.60" r="3" fill="rgba(26,179,148,1)" stroke="#fff" stroke-width="1"/>
<circle cx="774.95" cy="581.00" r="3" fill="rgba(26,179,148,1)" stroke="#fff" stroke-width="1"/>
<circle cx="798.50" cy="589.60" r="3" fill="rgba(26,179,148,1)" stroke="#fff" stroke-width="1"/>
<circle cx="822.04" cy="584.80" r="3" fill="rgba(26,179,148,1)" stroke="#fff" stroke-width="1"/>
<circle cx="845.59" cy="596.25" r="3" fill="rgba(26,179,148,1)" stroke="#fff" stroke-width="1"/>
<circle cx="869.13" cy="590.40" r="3" fill="rgba(26,179,148,1)" stroke="#fff" stroke-width="1"/>
<circle cx="892.68" cy="582.70" r="3" fill="rgba(26,179,148,1)" stroke="#fff" stroke-width="1"/>
<circle cx="916.22" cy="583.75" r="3" fill="rgba(26,179,148,1)" stroke="#fff" stroke-width="1"/>
<circle cx="939.77" cy="592.70" r="3" fill="rgba(26,179,148,1)" stroke="#fff" stroke-width="1"/>
<circle cx="963.31" cy="657.00" r="3" fill="rgba(26,179,148,1)" stroke="#fff" stroke-width="1"/>
<circle cx="986.86" cy="592.70" r="3" fill="rgba(26,179,148,1)" stroke="#fff" stroke-width="1"/>
<circle cx="1010.40" cy="657.00" r="3" fill="rgba(26,179,148,1)" stroke="#fff" stroke-width="1"/>
</g>
<g clip-path="url(#c1)">
<path d="M327.60,527.93 C337.02,527.93 341.73,527.93 351.14,527.93 C360.56,527.93 365.27,527.93 374.69,527.93 C384.11,527.93 388.82,527.93 398.23,527.93 C407.65,527.93 412.36,527.93 421.78,527.93 C431.20,527.93 435.91,527.93 445.32,527.93 C454.74,527.93 459.45,527.93 468.87,527.93 C478.29,527.93 483.00,527.93 492.41,527.93 C501.83,527.93 506.54,527.93 515.96,527.93 C525.38,527.93 530.09,527.93 539.50,527.93 C548.92,527.93 553.63,527.93 563.05,527.93 C572.47,527.93 577.18,527.93 586.59,527.93 C596.01,527.93 600.72,527.93 610.14,527.93 C619.56,527.93 624.26,527.93 633.68,527.93 C643.10,527.93 647.81,527.93 657.23,527.93 C666.65,527.93 671.35,527.93 680.77,527.93 C690.19,527.93 694.90,527.93 704.32,527.93 C713.74,527.93 718.44,527.93 727.86,527.93 C737.28,527.93 741.99,527.93 751.41,527.93 C760.82,527.93 765.53,527.93 774.95,527.93 C784.37,527.93 789.08,527.93 798.50,527.93 C807.91,527.93 812.62,527.93 822.04,527.93 C831.46,527.93 836.34,527.00 845.59,527.93 C855.18,529.25 859.54,533.10 869.13,534.43 C878.38,535.70 883.26,534.43 892.68,534.43 C902.09,534.43 906.80,534.43 916.22,534.43 C925.64,534.43 936.78,527.00 939.77,534.43 C955.61,575.68 953.89,657.00 963.31,657.00 C972.73,657.00 971.01,575.68 986.86,534.43 C989.84,527.00 1000.98,534.43 1010.40,534.43" fill="none" stroke="rgba(28,132,198,1)" stroke-width="3"/>
<circle cx="327.60" cy="527.93" r="3" fill="rgba(28,132,198,1)" stroke="#fff" stroke-width="1"/>
<circle cx="351.14" cy="527.93" r="3" fill="rgba(28,132,198,1)" stroke="#fff" stroke-width="1"/>
<circle cx="374.69" cy="527.93" r="3" fill="rgba(28,132,198,1)" stroke="#fff" stroke-width="1"/>
<circle cx="398.23" cy="527.93" r="3" fill="rgba(28,132,198,1)" stroke="#fff" stroke-width="1"/>
<circle cx="421.78" cy="527.93" r="3" fill="rgba(28,132,198,1)" stroke="#fff" stroke-width="1"/>
<circle cx="445.32" cy="527.93" r="3" fill="rgba(28,132,198,1)" stroke="#fff" stroke-width="1"/>
<circle cx="468.87" cy="527.93" r="3" fill="rgba(28,132,198,1)" stroke="#fff" stroke-width="1"/>
<circle cx="492.41" cy="527.93" r="3" fill="rgba(28,132,198,1)" stroke="#fff" stroke-width="1"/>
<circle cx="515.96" cy="527.93" r="3" fill="rgba(28,132,198,1)" stroke="#fff" stroke-width="1"/>
<circle cx="539.50" cy="527.93" r="3" fill="rgba(28,132,198,1)" stroke="#fff" stroke-width="1"/>
<circle cx="563.05" cy="527.93" r="3" fill="rgba(28,132,198,1)" stroke="#fff" stroke-width="1"/>
<circle cx="586.59" cy="527.93" r="3" fill="rgba(28,132,198,1)" stroke="#fff" stroke-width="1"/>
<circle cx="610.14" cy="527.93" r="3" fill="rgba(28,132,198,1)" stroke="#fff" stroke-width="1"/>
<circle cx="633.68" cy="527.93" r="3" fill="rgba(28,132,198,1)" stroke="#fff" stroke-width="1"/>
<circle cx="657.23" cy="527.93" r="3" fill="rgba(28,132,198,1)" stroke="#fff" stroke-width="1"/>
<circle cx="680.77" cy="527.93" r="3" fill="rgba(28,132,198,1)" stroke="#fff" stroke-width="1"/>
<circle cx="704.32" cy="527.93" r="3" fill="rgba(28,132,198,1)" stroke="#fff" stroke-width="1"/>
<circle cx="727.86" cy="527.93" r="3" fill="rgba(28,132,198,1)" stroke="#fff" stroke-width="1"/>
<circle cx="751.41" cy="527.93" r="3" fill="rgba(28,132,198,1)" stroke="#fff" stroke-width="1"/>
<circle cx="774.95" cy="527.93" r="3" fill="rgba(28,132,198,1)" stroke="#fff" stroke-width="1"/>
<circle cx="798.50" cy="527.93" r="3" fill="rgba(28,132,198,1)" stroke="#fff" stroke-width="1"/>
<circle cx="822.04" cy="527.93" r="3" fill="rgba(28,132,198,1)" stroke="#fff" stroke-width="1"/>
<circle cx="845.59" cy="527.93" r="3" fill="rgba(28,132,198,1)" stroke="#fff" stroke-width="1"/>
<circle cx="869.13" cy="534.43" r="3" fill="rgba(28,132,198,1)" stroke="#fff" stroke-width="1"/>
<circle cx="892.68" cy="534.43" r="3" fill="rgba(28,132,198,1)" stroke="#fff" stroke-width="1"/>
<circle cx="916.22" cy="534.43" r="3" fill="rgba(28,132,198,1)" stroke="#fff" stroke-width="1"/>
<circle cx="939.77" cy="534.43" r="3" fill="rgba(28,132,198,1)" stroke="#fff" stroke-width="1"/>
<circle cx="963.31" cy="657.00" r="3" fill="rgba(28,132,198,1)" stroke="#fff" stroke-width="1"/>
<circle cx="986.86" cy="534.43" r="3" fill="rgba(28,132,198,1)" stroke="#fff" stroke-width="1"/>
<circle cx="1010.40" cy="534.43" r="3" fill="rgba(28,132,198,1)" stroke="#fff" stroke-width="1"/>
</g>
<rect x="540.4" y="505" width="40" height="12" fill="rgba(28,132,198,0.3)" stroke="rgba(28,132,198,1)" stroke-width="3"/>
<text x="586.4" y="515.3" font-family="Liberation Sans" font-size="12" fill="#666">Цена</text>
<rect x="625.1" y="505" width="40" height="12" fill="rgba(26,179,148,0.5)" stroke="rgba(26,179,148,0.8)" stroke-width="3"/>
<text x="671.1" y="515.3" font-family="Liberation Sans" font-size="12" fill="#666">Выручка</text>
<rect x="728.1" y="505" width="40" height="12" fill="rgba(0,0,0,0.05)" stroke="rgba(0,0,0,0.1)" stroke-width="3"/>
<text x="774.1" y="515.3" font-family="Liberation Sans" font-size="12" fill="#666">Скидка</text>
<line x1="774.1" y1="511.5" x2="814.4" y2="511.5" stroke="#666" stroke-width="1"/>
</svg>
<svg style="position:absolute;left:0;top:0" width="1920" height="1054" viewBox="0 0 1920 1054">
<defs><clipPath id="c2"><rect x="326.1" y="0" width="685.8" height="1054"/></clipPath></defs>
<line x1="317.5" y1="1015.5" x2="1020.5" y2="1015.5" stroke="rgba(0,0,0,0.25)" stroke-width="1"/>
<line x1="317.5" y1="1002.5" x2="1020.5" y2="1002.5" stroke="rgba(0,0,0,0.1)" stroke-width="1"/>
<line x1="317.5" y1="989.5" x2="1020.5" y2="989.5" stroke="rgba(0,0,0,0.1)" stroke-width="1"/>
<line x1="317.5" y1="976.5" x2="1020.5" y2="976.5" stroke="rgba(0,0,0,0.1)" stroke-width="1"/>
<line x1="317.5" y1="963.5" x2="1020.5" y2="963.5" stroke="rgba(0,0,0,0.1)" stroke-width="1"/>
<line x1="317.5" y1="950.5" x2="1020.5" y2="950.5" stroke="rgba(0,0,0,0.1)" stroke-width="1"/>
<line x1="317.5" y1="937.5" x2="1020.5" y2="937.5" stroke="rgba(0,0,0,0.1)" stroke-width="1"/>
<line x1="317.5" y1="924.5" x2="1020.5" y2="924.5" stroke="rgba(0,0,0,0.1)" stroke-width="1"/>
<line x1="317.5" y1="911.5" x2="1020.5" y2="911.5" stroke="rgba(0,0,0,0.1)" stroke-width="1"/>
<line x1="317.5" y1="898.5" x2="1020.5" y2="898.5" stroke="rgba(0,0,0,0.1)" stroke-width="1"/>
<line x1="317.5" y1="885.5" x2="1020.5" y2="885.5" stroke="rgba(0,0,0,0.1)" stroke-width="1"/>
<line x1="327.5" y1="885.0" x2="327.5" y2="1025.0" stroke="rgba(0,0,0,0.25)" stroke-width="1"/>
<line x1="351.5" y1="885.0" x2="351.5" y2="1025.0" stroke="rgba(0,0,0,0.1)" stroke-width="1"/>
<line x1="374.5" y1="885.0" x2="374.5" y2="1025.0" stroke="rgba(0,0,0,0.1)" stroke-width="1"/>
<line x1="398.5" y1="885.0" x2="398.5" y2="1025.0" stroke="rgba(0,0,0,0.1)" stroke-width="1"/>
<line x1="421.5" y1="885.0" x2="421.5" y2="1025.0" stroke="rgba(0,0,0,0.1)" stroke-width="1"/>
<line x1="445.5" y1="885.0" x2="445.5" y2="1025.0" stroke="rgba(0,0,0,0.1)" stroke-width="1"/>
<line x1="468.5" y1="885.0" x2="468.5" y2="1025.0" stroke="rgba(0,0,0,0.1)" stroke-width="1"/>
<line x1="492.5" y1="885.0" x2="492.5" y2="1025.0" stroke="rgba(0,0,0,0.1)" stroke-width="1"/>
<line x1="515.5" y1="885.0" x2="515.5" y2="1025.0" stroke="rgba(0,0,0,0.1)" stroke-width="1"/>
<line x1="539.5" y1="885.0" x2="539.5" y2="1025.0" stroke="rgba(0,0,0,0.1)" stroke-width="1"/>
<line x1="563.5" y1="885.0" x2="563.5" y2="1025.0" stroke="rgba(0,0,0,0.1)" stroke-width="1"/>
<line x1="586.5" y1="885.0" x2="586.5" y2="1025.0" stroke="rgba(0,0,0,0.1)" stroke-width="1"/>
<line x1="610.5" y1="885.0" x2="610.5" y2="1025.0" stroke="rgba(0,0,0,0.1)" stroke-width="1"/>
<line x1="633.5" y1="885.0" x2="633.5" y2="1025.0" stroke="rgba(0,0,0,0.1)" stroke-width="1"/>
<line x1="657.5" y1="885.0" x2="657.5" y2="1025.0" stroke="rgba(0,0,0,0.1)" stroke-width="1"/>
<line x1="680.5" y1="885.0" x2="680.5" y2="1025.0" stroke="rgba(0,0,0,0.1)" stroke-width="1"/>
<line x1="704.5" y1="885.0" x2="704.5" y2="1025.0" stroke="rgba(0,0,0,0.1)" stroke-width="1"/>
<line x1="727.5" y1="885.0" x2="727.5" y2="1025.0" stroke="rgba(0,0,0,0.1)" stroke-width="1"/>
<line x1="751.5" y1="885.0" x2="751.5" y2="1025.0" stroke="rgba(0,0,0,0.1)" stroke-width="1"/>
<line x1="774.5" y1="885.0" x2="774.5" y2="1025.0" stroke="rgba(0,0,0,0.1)" stroke-width="1"/>
<line x1="798.5" y1="885.0" x2="798.5" y2="1025.0" stroke="rgba(0,0,0,0.1)" stroke-width="1"/>
<line x1="822.5" y1="885.0" x2="822.5" y2="1025.0" stroke="rgba(0,0,0,0.1)" stroke-width="1"/>
<line x1="845.5" y1="885.0" x2="845.5" y2="1025.0" stroke="rgba(0,0,0,0.1)" stroke-width="1"/>
<line x1="869.5" y1="885.0" x2="869.5" y2="1025.0" stroke="rgba(0,0,0,0.1)" stroke-width="1"/>
<line x1="892.5" y1="885.0" x2="892.5" y2="1025.0" stroke="rgba(0,0,0,0.1)" stroke-width="1"/>
<line x1="916.5" y1="885.0" x2="916.5" y2="1025.0" stroke="rgba(0,0,0,0.1)" stroke-width="1"/>
<line x1="939.5" y1="885.0" x2="939.5" y2="1025.0" stroke="rgba(0,0,0,0.1)" stroke-width="1"/>
<line x1="963.5" y1="885.0" x2="963.5" y2="1025.0" stroke="rgba(0,0,0,0.1)" stroke-width="1"/>
<line x1="986.5" y1="885.0" x2="986.5" y2="1025.0" stroke="rgba(0,0,0,0.1)" stroke-width="1"/>
<line x1="1010.5" y1="885.0" x2="1010.5" y2="1025.0" stroke="rgba(0,0,0,0.1)" stroke-width="1"/>
<text x="317.5" y="1018.2" text-anchor="end" font-family="Liberation Sans" font-size="12" fill="#5bc9ae">0</text>
<text x="317.5" y="992.2" text-anchor="end" font-family="Liberation Sans" font-size="12" fill="#5bc9ae">50</text>
<text x="317.5" y="966.2" text-anchor="end" font-family="Liberation Sans" font-size="12" fill="#5bc9ae">100</text>
<text x="317.5" y="940.2" text-anchor="end" font-family="Liberation Sans" font-size="12" fill="#5bc9ae">150</text>
<text x="317.5" y="914.2" text-anchor="end" font-family="Liberation Sans" font-size="12" fill="#5bc9ae">200</text>
<text x="317.5" y="888.2" text-anchor="end" font-family="Liberation Sans" font-size="12" fill="#5bc9ae">250</text>
<text x="1020.5" y="1018.2" text-anchor="start" font-family="Liberation Sans" font-size="12" fill="#1f86c7">8,000</text>
<text x="1020.5" y="1005.2" text-anchor="start" font-family="Liberation Sans" font-size="12" fill="#1f86c7">10,000</text>
<text x="1020.5" y="992.2" text-anchor="start" font-family="Liberation Sans" font-size="12" fill="#1f86c7">12,000</text>
<text x="1020.5" y="979.2" text-anchor="start" font-family="Liberation Sans" font-size="12" fill="#1f86c7">14,000</text>
<text x="1020.5" y="966.2" text-anchor="start" font-family="Liberation Sans" font-size="12" fill="#1f86c7">16,000</text>
<text x="1020.5" y="953.2" text-anchor="start" font-family="Liberation Sans" font-size="12" fill="#1f86c7">18,000</text>
<text x="1020.5" y="940.2" text-anchor="start" font-family="Liberation Sans" font-size="12" fill="#1f86c7">20,000</text>
<text x="1020.5" y="927.2" text-anchor="start" font-family="Liberation Sans" font-size="12" fill="#1f86c7">22,000</text>
<text x="1020.5" y="914.2" text-anchor="start" font-family="Liberation Sans" font-size="12" fill="#1f86c7">24,000</text>
<text x="1020.5" y="901.2" text-anchor="start" font-family="Liberation Sans" font-size="12" fill="#1f86c7">26,000</text>
<text x="1020.5" y="888.2" text-anchor="start" font-family="Liberation Sans" font-size="12" fill="#1f86c7">28,000</text>
<text transform="translate(327.60,1024.8) rotate(-45)" x="0" y="4.3" text-anchor="end" font-family="Liberation Sans" font-size="12" fill="#666">11.07</text>
<text transform="translate(351.14,1024.8) rotate(-45)" x="0" y="4.3" text-anchor="end" font-family="Liberation Sans" font-size="12" fill="#666">12.07</text>
<text transform="translate(374.69,1024.8) rotate(-45)" x="0" y="4.3" text-anchor="end" font-family="Liberation Sans" font-size="12" fill="#666">13.07</text>
<text transform="translate(398.23,1024.8) rotate(-45)" x="0" y="4.3" text-anchor="end" font-family="Liberation Sans" font-size="12" fill="#666">14.07</text>
<text transform="translate(421.78,1024.8) rotate(-45)" x="0" y="4.3" text-anchor="end" font-family="Liberation Sans" font-size="12" fill="#666">15.07</text>
<text transform="translate(445.32,1024.8) rotate(-45)" x="0" y="4.3" text-anchor="end" font-family="Liberation Sans" font-size="12" fill="#666">16.07</text>
<text transform="translate(468.87,1024.8) rotate(-45)" x="0" y="4.3" text-anchor="end" font-family="Liberation Sans" font-size="12" fill="#666">17.07</text>
<text transform="translate(492.41,1024.8) rotate(-45)" x="0" y="4.3" text-anchor="end" font-family="Liberation Sans" font-size="12" fill="#666">18.07</text>
<text transform="translate(515.96,1024.8) rotate(-45)" x="0" y="4.3" text-anchor="end" font-family="Liberation Sans" font-size="12" fill="#666">20.07</text>
<text transform="translate(539.50,1024.8) rotate(-45)" x="0" y="4.3" text-anchor="end" font-family="Liberation Sans" font-size="12" fill="#666">21.07</text>
<text transform="translate(563.05,1024.8) rotate(-45)" x="0" y="4.3" text-anchor="end" font-family="Liberation Sans" font-size="12" fill="#666">22.07</text>
<text transform="translate(586.59,1024.8) rotate(-45)" x="0" y="4.3" text-anchor="end" font-family="Liberation Sans" font-size="12" fill="#666">23.07</text>
<text transform="translate(610.14,1024.8) rotate(-45)" x="0" y="4.3" text-anchor="end" font-family="Liberation Sans" font-size="12" fill="#666">24.07</text>
<text transform="translate(633.68,1024.8) rotate(-45)" x="0" y="4.3" text-anchor="end" font-family="Liberation Sans" font-size="12" fill="#666">25.07</text>
<text transform="translate(657.23,1024.8) rotate(-45)" x="0" y="4.3" text-anchor="end" font-family="Liberation Sans" font-size="12" fill="#666">26.07</text>
<text transform="translate(680.77,1024.8) rotate(-45)" x="0" y="4.3" text-anchor="end" font-family="Liberation Sans" font-size="12" fill="#666">27.07</text>
<text transform="translate(704.32,1024.8) rotate(-45)" x="0" y="4.3" text-anchor="end" font-family="Liberation Sans" font-size="12" fill="#666">28.07</text>
<text transform="translate(727.86,1024.8) rotate(-45)" x="0" y="4.3" text-anchor="end" font-family="Liberation Sans" font-size="12" fill="#666">29.07</text>
<text transform="translate(751.41,1024.8) rotate(-45)" x="0" y="4.3" text-anchor="end" font-family="Liberation Sans" font-size="12" fill="#666">30.07</text>
<text transform="translate(774.95,1024.8) rotate(-45)" x="0" y="4.3" text-anchor="end" font-family="Liberation Sans" font-size="12" fill="#666">31.07</text>
<text transform="translate(798.50,1024.8) rotate(-45)" x="0" y="4.3" text-anchor="end" font-family="Liberation Sans" font-size="12" fill="#666">01.08</text>
<text transform="translate(822.04,1024.8) rotate(-45)" x="0" y="4.3" text-anchor="end" font-family="Liberation Sans" font-size="12" fill="#666">02.08</text>
<text transform="translate(845.59,1024.8) rotate(-45)" x="0" y="4.3" text-anchor="end" font-family="Liberation Sans" font-size="12" fill="#666">03.08</text>
<text transform="translate(869.13,1024.8) rotate(-45)" x="0" y="4.3" text-anchor="end" font-family="Liberation Sans" font-size="12" fill="#666">04.08</text>
<text transform="translate(892.68,1024.8) rotate(-45)" x="0" y="4.3" text-anchor="end" font-family="Liberation Sans" font-size="12" fill="#666">05.08</text>
<text transform="translate(916.22,1024.8) rotate(-45)" x="0" y="4.3" text-anchor="end" font-family="Liberation Sans" font-size="12" fill="#666">06.08</text>
<text transform="translate(939.77,1024.8) rotate(-45)" x="0" y="4.3" text-anchor="end" font-family="Liberation Sans" font-size="12" fill="#666">07.08</text>
<text transform="translate(963.31,1024.8) rotate(-45)" x="0" y="4.3" text-anchor="end" font-family="Liberation Sans" font-size="12" fill="#666">08.08</text>
<text transform="translate(986.86,1024.8) rotate(-45)" x="0" y="4.3" text-anchor="end" font-family="Liberation Sans" font-size="12" fill="#666">09.08</text>
<text transform="translate(1010.40,1024.8) rotate(-45)" x="0" y="4.3" text-anchor="end" font-family="Liberation Sans" font-size="12" fill="#666">10.08</text>
<path d="M327.60,1007.50 C337.02,1007.42 341.73,1007.30 351.14,1007.30 C360.56,1007.30 365.27,1007.46 374.69,1007.50 C384.11,1007.54 388.82,1007.44 398.23,1007.50 C407.65,1007.56 418.78,1015.00 421.78,1007.80 C437.62,966.80 429.49,926.40 445.32,885.60 C448.32,885.00 459.46,886.00 468.87,886.50 C478.29,887.00 482.99,887.48 492.41,888.10 C501.83,888.72 506.54,889.06 515.96,889.60 C525.37,890.14 530.08,890.34 539.50,890.80 C548.92,891.26 553.63,891.48 563.05,891.90 C572.47,892.32 577.18,892.48 586.59,892.90 C596.01,893.32 600.72,893.58 610.14,894.00 C619.55,894.42 624.26,894.64 633.68,895.00 C643.10,895.36 647.81,895.42 657.23,895.80 C666.65,896.18 671.35,896.52 680.77,896.90 C690.19,897.28 694.90,897.42 704.32,897.70 C713.73,897.98 718.45,898.00 727.86,898.30 C737.28,898.60 741.99,898.86 751.41,899.20 C760.82,899.54 765.53,899.68 774.95,900.00 C784.37,900.32 789.08,900.42 798.50,900.80 C807.92,901.18 812.62,901.52 822.04,901.90 C831.46,902.28 836.17,902.38 845.59,902.70 C855.00,903.02 859.71,903.16 869.13,903.50 C878.55,903.84 883.26,904.02 892.68,904.40 C902.09,904.78 906.80,905.03 916.22,905.40 C925.64,905.77 930.35,905.91 939.77,906.25 C949.18,906.59 953.89,906.81 963.31,907.10 C972.73,907.39 977.44,907.58 986.86,907.70 C996.27,907.82 1000.98,907.70 1010.40,907.70 L1010.40,1015.0 L327.60,1015.0 Z" fill="rgba(28,132,198,0.3)"/>
<path d="M327.60,1003.10 C337.02,1005.22 342.49,1010.35 351.14,1008.40 C361.33,1006.11 364.53,994.68 374.69,992.50 C383.36,990.64 388.69,996.82 398.23,998.30 C407.52,999.74 413.17,996.75 421.78,999.80 C432.01,1003.43 438.80,1015.00 445.32,1015.00 C457.63,1006.61 461.62,987.47 468.87,967.70 C480.46,936.07 483.89,885.00 492.41,886.50 C502.72,890.51 504.16,975.15 515.96,986.00 C522.99,992.47 525.92,945.72 539.50,929.80 C544.76,923.64 553.63,930.46 563.05,930.80 C572.46,931.14 578.35,934.70 586.59,931.50 C597.18,927.38 601.58,910.92 610.14,912.50 C620.42,914.40 622.49,931.74 633.68,940.20 C641.33,945.98 647.77,947.98 657.23,948.10 C666.61,948.22 671.32,940.92 680.77,940.80 C690.16,940.68 695.87,942.93 704.32,947.50 C714.70,953.11 717.91,965.02 727.86,966.25 C736.75,967.34 742.13,958.72 751.41,953.30 C760.96,947.72 765.05,940.05 774.95,938.75 C783.89,937.57 788.90,946.38 798.50,947.10 C807.73,947.80 813.03,941.03 822.04,942.30 C831.86,943.69 836.01,953.32 845.59,953.75 C854.85,954.16 859.65,947.97 869.13,944.40 C878.49,940.87 882.98,937.50 892.68,936.00 C901.82,934.58 907.19,934.97 916.22,937.10 C926.02,939.41 930.09,943.89 939.77,947.10 C948.92,950.13 953.89,952.70 963.31,952.70 C972.73,952.70 982.11,940.82 986.86,947.10 C1000.95,965.74 1000.98,987.84 1010.40,1015.00 L1010.40,1015.0 L327.60,1015.0 Z" fill="rgba(26,179,148,0.5)"/>
<g clip-path="url(#c2)">
<path d="M327.60,1007.50 C337.02,1007.42 341.73,1007.30 351.14,1007.30 C360.56,1007.30 365.27,1007.46 374.69,1007.50 C384.11,1007.54 388.82,1007.44 398.23,1007.50 C407.65,1007.56 418.78,1015.00 421.78,1007.80 C437.62,966.80 429.49,926.40 445.32,885.60 C448.32,885.00 459.46,886.00 468.87,886.50 C478.29,887.00 482.99,887.48 492.41,888.10 C501.83,888.72 506.54,889.06 515.96,889.60 C525.37,890.14 530.08,890.34 539.50,890.80 C548.92,891.26 553.63,891.48 563.05,891.90 C572.47,892.32 577.18,892.48 586.59,892.90 C596.01,893.32 600.72,893.58 610.14,894.00 C619.55,894.42 624.26,894.64 633.68,895.00 C643.10,895.36 647.81,895.42 657.23,895.80 C666.65,896.18 671.35,896.52 680.77,896.90 C690.19,897.28 694.90,897.42 704.32,897.70 C713.73,897.98 718.45,898.00 727.86,898.30 C737.28,898.60 741.99,898.86 751.41,899.20 C760.82,899.54 765.53,899.68 774.95,900.00 C784.37,900.32 789.08,900.42 798.50,900.80 C807.92,901.18 812.62,901.52 822.04,901.90 C831.46,902.28 836.17,902.38 845.59,902.70 C855.00,903.02 859.71,903.16 869.13,903.50 C878.55,903.84 883.26,904.02 892.68,904.40 C902.09,904.78 906.80,905.03 916.22,905.40 C925.64,905.77 930.35,905.91 939.77,906.25 C949.18,906.59 953.89,906.81 963.31,907.10 C972.73,907.39 977.44,907.58 986.86,907.70 C996.27,907.82 1000.98,907.70 1010.40,907.70" fill="none" stroke="rgba(28,132,198,1)" stroke-width="3"/>
<circle cx="327.60" cy="1007.50" r="3" fill="rgba(28,132,198,1)" stroke="#fff" stroke-width="1"/>
<circle cx="351.14" cy="1007.30" r="3" fill="rgba(28,132,198,1)" stroke="#fff" stroke-width="1"/>
<circle cx="374.69" cy="1007.50" r="3" fill="rgba(28,132,198,1)" stroke="#fff" stroke-width="1"/>
<circle cx="398.23" cy="1007.50" r="3" fill="rgba(28,132,198,1)" stroke="#fff" stroke-width="1"/>
<circle cx="421.78" cy="1007.80" r="3" fill="rgba(28,132,198,1)" stroke="#fff" stroke-width="1"/>
<circle cx="445.32" cy="885.60" r="3" fill="rgba(28,132,198,1)" stroke="#fff" stroke-width="1"/>
<circle cx="468.87" cy="886.50" r="3" fill="rgba(28,132,198,1)" stroke="#fff" stroke-width="1"/>
<circle cx="492.41" cy="888.10" r="3" fill="rgba(28,132,198,1)" stroke="#fff" stroke-width="1"/>
<circle cx="515.96" cy="889.60" r="3" fill="rgba(28,132,198,1)" stroke="#fff" stroke-width="1"/>
<circle cx="539.50" cy="890.80" r="3" fill="rgba(28,132,198,1)" stroke="#fff" stroke-width="1"/>
<circle cx="563.05" cy="891.90" r="3" fill="rgba(28,132,198,1)" stroke="#fff" stroke-width="1"/>
<circle cx="586.59" cy="892.90" r="3" fill="rgba(28,132,198,1)" stroke="#fff" stroke-width="1"/>
<circle cx="610.14" cy="894.00" r="3" fill="rgba(28,132,198,1)" stroke="#fff" stroke-width="1"/>
<circle cx="633.68" cy="895.00" r="3" fill="rgba(28,132,198,1)" stroke="#fff" stroke-width="1"/>
<circle cx="657.23" cy="895.80" r="3" fill="rgba(28,132,198,1)" stroke="#fff" stroke-width="1"/>
<circle cx="680.77" cy="896.90" r="3" fill="rgba(28,132,198,1)" stroke="#fff" stroke-width="1"/>
<circle cx="704.32" cy="897.70" r="3" fill="rgba(28,132,198,1)" stroke="#fff" stroke-width="1"/>
<circle cx="727.86" cy="898.30" r="3" fill="rgba(28,132,198,1)" stroke="#fff" stroke-width="1"/>
<circle cx="751.41" cy="899.20" r="3" fill="rgba(28,132,198,1)" stroke="#fff" stroke-width="1"/>
<circle cx="774.95" cy="900.00" r="3" fill="rgba(28,132,198,1)" stroke="#fff" stroke-width="1"/>
<circle cx="798.50" cy="900.80" r="3" fill="rgba(28,132,198,1)" stroke="#fff" stroke-width="1"/>
<circle cx="822.04" cy="901.90" r="3" fill="rgba(28,132,198,1)" stroke="#fff" stroke-width="1"/>
<circle cx="845.59" cy="902.70" r="3" fill="rgba(28,132,198,1)" stroke="#fff" stroke-width="1"/>
<circle cx="869.13" cy="903.50" r="3" fill="rgba(28,132,198,1)" stroke="#fff" stroke-width="1"/>
<circle cx="892.68" cy="904.40" r="3" fill="rgba(28,132,198,1)" stroke="#fff" stroke-width="1"/>
<circle cx="916.22" cy="905.40" r="3" fill="rgba(28,132,198,1)" stroke="#fff" stroke-width="1"/>
<circle cx="939.77" cy="906.25" r="3" fill="rgba(28,132,198,1)" stroke="#fff" stroke-width="1"/>
<circle cx="963.31" cy="907.10" r="3" fill="rgba(28,132,198,1)" stroke="#fff" stroke-width="1"/>
<circle cx="986.86" cy="907.70" r="3" fill="rgba(28,132,198,1)" stroke="#fff" stroke-width="1"/>
<circle cx="1010.40" cy="907.70" r="3" fill="rgba(28,132,198,1)" stroke="#fff" stroke-width="1"/>
</g>
<g clip-path="url(#c2)">
<path d="M327.60,1003.10 C337.02,1005.22 342.49,1010.35 351.14,1008.40 C361.33,1006.11 364.53,994.68 374.69,992.50 C383.36,990.64 388.69,996.82 398.23,998.30 C407.52,999.74 413.17,996.75 421.78,999.80 C432.01,1003.43 438.80,1015.00 445.32,1015.00 C457.63,1006.61 461.62,987.47 468.87,967.70 C480.46,936.07 483.89,885.00 492.41,886.50 C502.72,890.51 504.16,975.15 515.96,986.00 C522.99,992.47 525.92,945.72 539.50,929.80 C544.76,923.64 553.63,930.46 563.05,930.80 C572.46,931.14 578.35,934.70 586.59,931.50 C597.18,927.38 601.58,910.92 610.14,912.50 C620.42,914.40 622.49,931.74 633.68,940.20 C641.33,945.98 647.77,947.98 657.23,948.10 C666.61,948.22 671.32,940.92 680.77,940.80 C690.16,940.68 695.87,942.93 704.32,947.50 C714.70,953.11 717.91,965.02 727.86,966.25 C736.75,967.34 742.13,958.72 751.41,953.30 C760.96,947.72 765.05,940.05 774.95,938.75 C783.89,937.57 788.90,946.38 798.50,947.10 C807.73,947.80 813.03,941.03 822.04,942.30 C831.86,943.69 836.01,953.32 845.59,953.75 C854.85,954.16 859.65,947.97 869.13,944.40 C878.49,940.87 882.98,937.50 892.68,936.00 C901.82,934.58 907.19,934.97 916.22,937.10 C926.02,939.41 930.09,943.89 939.77,947.10 C948.92,950.13 953.89,952.70 963.31,952.70 C972.73,952.70 982.11,940.82 986.86,947.10 C1000.95,965.74 1000.98,987.84 1010.40,1015.00" fill="none" stroke="rgba(26,179,148,0.78)" stroke-width="3"/>
<circle cx="327.60" cy="1003.10" r="3" fill="rgba(26,179,148,1)" stroke="#fff" stroke-width="1"/>
<circle cx="351.14" cy="1008.40" r="3" fill="rgba(26,179,148,1)" stroke="#fff" stroke-width="1"/>
<circle cx="374.69" cy="992.50" r="3" fill="rgba(26,179,148,1)" stroke="#fff" stroke-width="1"/>
<circle cx="398.23" cy="998.30" r="3" fill="rgba(26,179,148,1)" stroke="#fff" stroke-width="1"/>
<circle cx="421.78" cy="999.80" r="3" fill="rgba(26,179,148,1)" stroke="#fff" stroke-width="1"/>
<circle cx="445.32" cy="1015.00" r="3" fill="rgba(26,179,148,1)" stroke="#fff" stroke-width="1"/>
<circle cx="468.87" cy="967.70" r="3" fill="rgba(26,179,148,1)" stroke="#fff" stroke-width="1"/>
<circle cx="492.41" cy="886.50" r="3" fill="rgba(26,179,148,1)" stroke="#fff" stroke-width="1"/>
<circle cx="515.96" cy="986.00" r="3" fill="rgba(26,179,148,1)" stroke="#fff" stroke-width="1"/>
<circle cx="539.50" cy="929.80" r="3" fill="rgba(26,179,148,1)" stroke="#fff" stroke-width="1"/>
<circle cx="563.05" cy="930.80" r="3" fill="rgba(26,179,148,1)" stroke="#fff" stroke-width="1"/>
<circle cx="586.59" cy="931.50" r="3" fill="rgba(26,179,148,1)" stroke="#fff" stroke-width="1"/>
<circle cx="610.14" cy="912.50" r="3" fill="rgba(26,179,148,1)" stroke="#fff" stroke-width="1"/>
<circle cx="633.68" cy="940.20" r="3" fill="rgba(26,179,148,1)" stroke="#fff" stroke-width="1"/>
<circle cx="657.23" cy="948.10" r="3" fill="rgba(26,179,148,1)" stroke="#fff" stroke-width="1"/>
<circle cx="680.77" cy="940.80" r="3" fill="rgba(26,179,148,1)" stroke="#fff" stroke-width="1"/>
<circle cx="704.32" cy="947.50" r="3" fill="rgba(26,179,148,1)" stroke="#fff" stroke-width="1"/>
<circle cx="727.86" cy="966.25" r="3" fill="rgba(26,179,148,1)" stroke="#fff" stroke-width="1"/>
<circle cx="751.41" cy="953.30" r="3" fill="rgba(26,179,148,1)" stroke="#fff" stroke-width="1"/>
<circle cx="774.95" cy="938.75" r="3" fill="rgba(26,179,148,1)" stroke="#fff" stroke-width="1"/>
<circle cx="798.50" cy="947.10" r="3" fill="rgba(26,179,148,1)" stroke="#fff" stroke-width="1"/>
<circle cx="822.04" cy="942.30" r="3" fill="rgba(26,179,148,1)" stroke="#fff" stroke-width="1"/>
<circle cx="845.59" cy="953.75" r="3" fill="rgba(26,179,148,1)" stroke="#fff" stroke-width="1"/>
<circle cx="869.13" cy="944.40" r="3" fill="rgba(26,179,148,1)" stroke="#fff" stroke-width="1"/>
<circle cx="892.68" cy="936.00" r="3" fill="rgba(26,179,148,1)" stroke="#fff" stroke-width="1"/>
<circle cx="916.22" cy="937.10" r="3" fill="rgba(26,179,148,1)" stroke="#fff" stroke-width="1"/>
<circle cx="939.77" cy="947.10" r="3" fill="rgba(26,179,148,1)" stroke="#fff" stroke-width="1"/>
<circle cx="963.31" cy="952.70" r="3" fill="rgba(26,179,148,1)" stroke="#fff" stroke-width="1"/>
<circle cx="986.86" cy="947.10" r="3" fill="rgba(26,179,148,1)" stroke="#fff" stroke-width="1"/>
<circle cx="1010.40" cy="1015.00" r="3" fill="rgba(26,179,148,1)" stroke="#fff" stroke-width="1"/>
</g>
<rect x="579.5" y="863" width="40" height="12" fill="rgba(26,179,148,0.5)" stroke="rgba(26,179,148,0.8)" stroke-width="3"/>
<text x="625.5" y="873.3" font-family="Liberation Sans" font-size="12" fill="#666">Продажи</text>
<rect x="686" y="863" width="40" height="12" fill="rgba(28,132,198,0.3)" stroke="rgba(28,132,198,1)" stroke-width="3"/>
<text x="732" y="873.3" font-family="Liberation Sans" font-size="12" fill="#666">Остатки</text>
</svg>
<div style="position:absolute;left:1513px;top:201px;width:384px;height:1px;background:#e7eaec;"></div>
<div style="position:absolute;left:1513px;top:202px;width:384px;height:150px;background:#fff;"></div>
<div style="position:absolute;left:1533.7px;top:224.40px;height:17px;line-height:17px;font-size:13px;color:#5f6264;font-weight:normal;white-space:nowrap;letter-spacing:0.270px;-webkit-text-stroke:0.25px #5f6264;">Позиция категории</div>
<div style="position:absolute;left:1656px;top:222px;width:84px;height:24px;background:#1ab394;border-radius:3px;"></div>
<div style="position:absolute;left:1663.6px;top:226.84px;height:15px;line-height:15px;font-size:12px;color:#fff;font-weight:normal;white-space:nowrap;letter-spacing:-0.022px;">Все позиции</div>
<div style="position:absolute;left:1535px;top:282.5px;width:287px;height:1.6px;background:#1ab394;"></div>
<div style="position:absolute;left:1820px;top:281.5px;width:3.5px;height:3.5px;border-radius:50%;background:#f8a030;"></div>
<div style="position:absolute;left:1533.7px;top:300.54px;height:13px;line-height:13px;font-size:10px;color:#676a6c;font-weight:normal;white-space:nowrap;letter-spacing:-0.401px;">Прошлая неделя</div>
<div style="position:absolute;left:1689px;top:300.54px;height:13px;line-height:13px;font-size:10px;color:#676a6c;font-weight:normal;white-space:nowrap;letter-spacing:-0.195px;">Динамика</div>
<div style="position:absolute;left:1813.5px;top:300.54px;height:13px;line-height:13px;font-size:10px;color:#676a6c;font-weight:normal;white-space:nowrap;letter-spacing:-0.523px;">Сейчас</div>
<div style="position:absolute;left:1533.7px;top:319.80px;height:17px;line-height:17px;font-size:13px;color:#606365;font-weight:normal;white-space:nowrap;-webkit-text-stroke:0.45px currentColor;">1</div>
<div style="position:absolute;left:1689px;top:319.80px;height:17px;line-height:17px;font-size:13px;color:#606365;font-weight:normal;white-space:nowrap;letter-spacing:0.452px;-webkit-text-stroke:0.45px currentColor;">0%</div>
<div style="position:absolute;left:1813.5px;top:319.80px;height:17px;line-height:17px;font-size:13px;color:#606365;font-weight:normal;white-space:nowrap;-webkit-text-stroke:0.45px currentColor;">1</div>
<div style="position:absolute;left:1754.5px;top:380.5px;width:72px;height:42px;background:#fff;border:1px solid #e7eaec;border-bottom:none;border-radius:4px 4px 0 0;box-sizing:border-box;"></div>
<div style="position:absolute;left:1781px;top:393.30px;height:17px;line-height:17px;font-size:13px;color:#3f4853;font-weight:normal;white-space:nowrap;letter-spacing:-0.578px;">FBO</div>
<div style="position:absolute;left:1853.3px;top:393.30px;height:17px;line-height:17px;font-size:13px;color:#a7b1c2;font-weight:normal;white-space:nowrap;letter-spacing:-0.899px;">FBS</div>
<div style="position:absolute;left:1513px;top:421px;width:384px;height:345px;background:#fff;border:1px solid #e7eaec;box-sizing:border-box;"></div>
<div style="position:absolute;left:1755.5px;top:420px;width:70px;height:3px;background:#fff;"></div>
<svg style="position:absolute;left:1543px;top:446.0px" width="11" height="11" viewBox="0 0 11 11">
<rect x="0.6" y="0.6" width="9.8" height="9.8" rx="1" fill="none" stroke="#1ab394" stroke-width="1.1" opacity="0.85"/>
<path d="M5.5,2.5 v6 M2.5,5.5 h6" stroke="#1ab394" stroke-width="1.1" opacity="0.85"/></svg>
<div style="position:absolute;left:1558px;top:443.50px;height:17px;line-height:17px;font-size:13px;color:#676a6c;font-weight:normal;white-space:nowrap;letter-spacing:-1.145px;">SKU</div>
<div style="position:absolute;left:1733.4px;top:442.90px;height:17px;line-height:17px;font-size:13px;color:#676a6c;font-weight:normal;white-space:nowrap;letter-spacing:0.147px;">257476142</div>
<svg style="position:absolute;left:1543px;top:483.2px" width="11" height="11" viewBox="0 0 11 11">
<rect x="0.6" y="0.6" width="9.8" height="9.8" rx="1" fill="none" stroke="#1ab394" stroke-width="1.1" opacity="0.85"/>
<path d="M5.5,2.5 v6 M2.5,5.5 h6" stroke="#1ab394" stroke-width="1.1" opacity="0.85"/></svg>
<div style="position:absolute;left:1558px;top:480.70px;height:17px;line-height:17px;font-size:13px;color:#676a6c;font-weight:normal;white-space:nowrap;letter-spacing:0.524px;">Категория</div>
<svg style="position:absolute;left:1543px;top:520.1px" width="11" height="11" viewBox="0 0 11 11">
<rect x="0.6" y="0.6" width="9.8" height="9.8" rx="1" fill="none" stroke="#1ab394" stroke-width="1.1" opacity="0.85"/>
<path d="M5.5,2.5 v6 M2.5,5.5 h6" stroke="#1ab394" stroke-width="1.1" opacity="0.85"/></svg>
<div style="position:absolute;left:1558px;top:517.60px;height:17px;line-height:17px;font-size:13px;color:#676a6c;font-weight:normal;white-space:nowrap;letter-spacing:0.147px;">Бренд</div>
<div style="position:absolute;left:1733.4px;top:516.60px;height:17px;line-height:17px;font-size:13px;color:#337ab7;font-weight:normal;white-space:nowrap;letter-spacing:0.060px;">Sun Corn</div>
<svg style="position:absolute;left:1543px;top:557.2px" width="11" height="11" viewBox="0 0 11 11">
<rect x="0.6" y="0.6" width="9.8" height="9.8" rx="1" fill="none" stroke="#1ab394" stroke-width="1.1" opacity="0.85"/>
<path d="M5.5,2.5 v6 M2.5,5.5 h6" stroke="#1ab394" stroke-width="1.1" opacity="0.85"/></svg>
<div style="position:absolute;left:1558px;top:554.70px;height:17px;line-height:17px;font-size:13px;color:#676a6c;font-weight:normal;white-space:nowrap;letter-spacing:0.340px;">Продавец</div>
<div style="position:absolute;left:1733.4px;top:553.70px;height:17px;line-height:17px;font-size:13px;color:#337ab7;font-weight:normal;white-space:nowrap;letter-spacing:0.060px;">Sun Corn</div>
<div style="position:absolute;left:1542.5px;top:590.60px;height:17px;line-height:17px;font-size:13px;color:#676a6c;font-weight:normal;white-space:nowrap;letter-spacing:0.109px;">Цена</div>
<div style="position:absolute;left:1733.4px;top:590.60px;height:17px;line-height:17px;font-size:13px;color:#676a6c;font-weight:normal;white-space:nowrap;letter-spacing:0.113px;">139 руб.</div>
<div style="position:absolute;left:1542.5px;top:625.50px;height:17px;line-height:17px;font-size:13px;color:#676a6c;font-weight:normal;white-space:nowrap;letter-spacing:0.143px;">Скидка</div>
<div style="position:absolute;left:1733.4px;top:625.50px;height:17px;line-height:17px;font-size:13px;color:#676a6c;font-weight:normal;white-space:nowrap;letter-spacing:-0.302px;">5 %</div>
<div style="position:absolute;left:1542.5px;top:660.30px;height:17px;line-height:17px;font-size:13px;color:#676a6c;font-weight:normal;white-space:nowrap;letter-spacing:0.248px;">Продажа</div>
<div style="position:absolute;left:1733.4px;top:660.30px;height:17px;line-height:17px;font-size:13px;color:#676a6c;font-weight:normal;white-space:nowrap;letter-spacing:0.113px;">132 руб.</div>
<div style="position:absolute;left:1542.5px;top:695.20px;height:17px;line-height:17px;font-size:13px;color:#676a6c;font-weight:normal;white-space:nowrap;letter-spacing:0.312px;">Отзывы</div>
<div style="position:absolute;left:1733.4px;top:695.20px;height:17px;line-height:17px;font-size:13px;color:#676a6c;font-weight:normal;white-space:nowrap;letter-spacing:-0.068px;">700</div>
<div style="position:absolute;left:1542.5px;top:730.70px;height:17px;line-height:17px;font-size:13px;color:#676a6c;font-weight:normal;white-space:nowrap;letter-spacing:0.133px;">Схема работы</div>
<div style="position:absolute;left:1733.4px;top:730.70px;height:17px;line-height:17px;font-size:13px;color:#676a6c;font-weight:normal;white-space:nowrap;letter-spacing:-0.745px;">FBO</div>
<svg style="position:absolute;left:1733px;top:479.8px" width="12" height="12" viewBox="0 0 14 14">
<defs><clipPath id="oz1733479"><rect x="0" y="0" width="14" height="14" rx="3.2"/></clipPath></defs>
<g clip-path="url(#oz1733479)">
<rect x="0" y="0" width="14" height="14" fill="#005bff"/>
<path d="M2,14 L14,6.5 L14,14 Z" fill="#f91155"/>
<ellipse cx="7" cy="7.3" rx="5.5" ry="3.5" transform="rotate(-12 7 7.3)" fill="#f91155" stroke="#fff" stroke-width="1.5"/>
</g>
</svg>
<div style="position:absolute;left:1748.3px;top:478.89px;height:14px;line-height:14px;font-size:11px;color:#999999;font-weight:normal;white-space:nowrap;letter-spacing:0.567px;">Попкорн</div>
<div style="position:absolute;left:1534px;top:470px;width:342px;height:1px;background:#e7eaec;"></div>
<div style="position:absolute;left:1534px;top:507px;width:342px;height:1px;background:#e7eaec;"></div>
<div style="position:absolute;left:1534px;top:544px;width:342px;height:1px;background:#e7eaec;"></div>
<div style="position:absolute;left:1534px;top:581px;width:342px;height:1px;background:#e7eaec;"></div>
<div style="position:absolute;left:1534px;top:616px;width:342px;height:1px;background:#e7eaec;"></div>
<div style="position:absolute;left:1534px;top:651px;width:342px;height:1px;background:#e7eaec;"></div>
<div style="position:absolute;left:1534px;top:686px;width:342px;height:1px;background:#e7eaec;"></div>
<div style="position:absolute;left:1534px;top:721px;width:342px;height:1px;background:#e7eaec;"></div>
<div style="position:absolute;left:1513px;top:779px;width:384px;height:2px;background:#e7eaec;"></div>
<div style="position:absolute;left:1513px;top:781px;width:384px;height:273px;background:#fff;"></div>
<div style="position:absolute;left:1528.3px;top:795.70px;height:19px;line-height:19px;font-size:15px;color:#626567;font-weight:normal;white-space:nowrap;letter-spacing:0.112px;-webkit-text-stroke:0.5px currentColor;">Сравнение с прошлой неделей</div>
<div style="position:absolute;left:1513px;top:827.5px;width:384px;height:1px;background:#e7eaec;"></div>
<div style="position:absolute;left:1513px;top:911.5px;width:384px;height:1px;background:#e7eaec;"></div>
<div style="position:absolute;left:1513px;top:996px;width:384px;height:1px;background:#e7eaec;"></div>
<div style="position:absolute;left:1533.7px;top:848.43px;height:13px;line-height:13px;font-size:10px;color:#676a6c;font-weight:normal;white-space:nowrap;letter-spacing:0.552px;">Продаж</div>
<div style="position:absolute;left:1657.6px;top:848.43px;height:13px;line-height:13px;font-size:10px;color:#676a6c;font-weight:normal;white-space:nowrap;">%</div>
<div style="position:absolute;left:1782.9px;top:848.43px;height:13px;line-height:13px;font-size:10px;color:#676a6c;font-weight:normal;white-space:nowrap;letter-spacing:0.184px;">Было</div>
<div style="position:absolute;left:1533.7px;top:867.15px;height:18px;line-height:18px;font-size:14px;color:#626567;font-weight:normal;white-space:nowrap;letter-spacing:0.481px;-webkit-text-stroke:0.45px currentColor;">820 шт.</div>
<svg style="position:absolute;left:1658.5px;top:871.5px" width="7" height="10" viewBox="0 0 7 10"><path d="M2.4,0 h2.2 v5.5 h2.2 L3.5,10 L0.2,5.5 h2.2 Z" fill="#ed5565"/></svg>
<div style="position:absolute;left:1665.5px;top:867.15px;height:18px;line-height:18px;font-size:14px;color:#ed5565;font-weight:normal;white-space:nowrap;letter-spacing:-0.105px;-webkit-text-stroke:0.3px currentColor;">6.7%</div>
<div style="position:absolute;left:1783px;top:867.15px;height:18px;line-height:18px;font-size:14px;color:#626567;font-weight:normal;white-space:nowrap;letter-spacing:0.538px;-webkit-text-stroke:0.45px currentColor;">879 шт.</div>
<div style="position:absolute;left:1533.7px;top:932.43px;height:13px;line-height:13px;font-size:10px;color:#676a6c;font-weight:normal;white-space:nowrap;letter-spacing:0.394px;">Ск. продаж</div>
<div style="position:absolute;left:1657.6px;top:932.43px;height:13px;line-height:13px;font-size:10px;color:#676a6c;font-weight:normal;white-space:nowrap;">%</div>
<div style="position:absolute;left:1782.9px;top:932.43px;height:13px;line-height:13px;font-size:10px;color:#676a6c;font-weight:normal;white-space:nowrap;letter-spacing:0.184px;">Было</div>
<div style="position:absolute;left:1533.7px;top:950.65px;height:18px;line-height:18px;font-size:14px;color:#626567;font-weight:normal;white-space:nowrap;letter-spacing:0.656px;-webkit-text-stroke:0.45px currentColor;">117 шт./д.</div>
<svg style="position:absolute;left:1658.5px;top:955px" width="7" height="10" viewBox="0 0 7 10"><path d="M2.4,0 h2.2 v5.5 h2.2 L3.5,10 L0.2,5.5 h2.2 Z" fill="#ed5565"/></svg>
<div style="position:absolute;left:1665.5px;top:950.65px;height:18px;line-height:18px;font-size:14px;color:#ed5565;font-weight:normal;white-space:nowrap;letter-spacing:-0.105px;-webkit-text-stroke:0.3px currentColor;">7.1%</div>
<div style="position:absolute;left:1783px;top:950.65px;height:18px;line-height:18px;font-size:14px;color:#626567;font-weight:normal;white-space:nowrap;letter-spacing:0.541px;-webkit-text-stroke:0.45px currentColor;">126 шт./д.</div>
<div style="position:absolute;left:1533.7px;top:1016.53px;height:13px;line-height:13px;font-size:10px;color:#676a6c;font-weight:normal;white-space:nowrap;letter-spacing:0.009px;">Склад</div>
<div style="position:absolute;left:1533.7px;top:1034.95px;height:18px;line-height:18px;font-size:14px;color:#626567;font-weight:normal;white-space:nowrap;letter-spacing:0.132px;-webkit-text-stroke:0.45px currentColor;">24491 шт.</div>
<div style="position:absolute;left:1592px;top:1014.5px;width:300px;height:60px;border-radius:9px 23px 0 0 / 9px 33.5px 0 0;overflow:hidden;
background:linear-gradient(90deg,#272a45 0%,#363b5a 60%,#454c6c 100%);box-shadow:0 0 16px rgba(0,0,0,0.28);">
<div style="position:absolute;left:276.7px;top:-22.8px;width:56.6px;height:56.6px;border-radius:50%;background:#1fbb45;"></div>
</div>
<div style="position:absolute;left:1607.8px;top:1024.70px;height:19px;line-height:19px;font-size:15px;color:#ffffff;font-weight:normal;white-space:nowrap;letter-spacing:0.000px;-webkit-text-stroke:0.15px currentColor;">Напишите нам, мы онлайн!</div>
</body></html>
